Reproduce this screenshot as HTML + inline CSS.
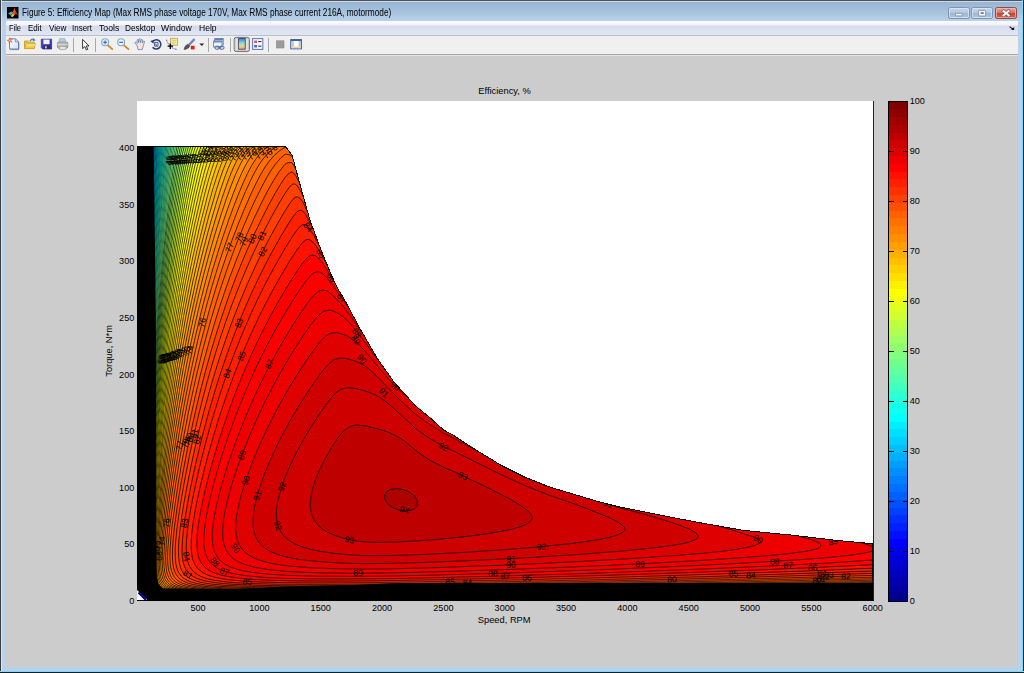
<!DOCTYPE html>
<html><head><meta charset="utf-8"><title>Figure 5</title>
<style>
html,body{margin:0;padding:0;}
body{width:1024px;height:673px;overflow:hidden;position:relative;background:#b9d1ea;font-family:"Liberation Sans",sans-serif;}
#frame{position:absolute;left:0;top:0;width:1024px;height:673px;box-sizing:border-box;background:#b9d1ea;}
#edgeT{position:absolute;left:0;top:0;width:1024px;height:1px;background:#4e5256;}
#edgeL{position:absolute;left:0;top:0;width:2px;height:673px;background:linear-gradient(90deg,#3a3b3d 0,#3a3b3d 1px,#d9e8f8 1px);}
#edgeR{position:absolute;left:1022px;top:0;width:2px;height:673px;background:linear-gradient(90deg,#7fd8f6 0,#7fd8f6 1px,#0b252c 1px);}
#edgeB{position:absolute;left:0;top:671px;width:1024px;height:2px;background:linear-gradient(180deg,#7fd8f6 0,#7fd8f6 1px,#0b252c 1px);}
#title{position:absolute;left:1px;top:1px;width:1021px;height:20px;background:linear-gradient(180deg,#c9dcef 0,#c9dcef 1px,#98b4d2 1px,#a4bfdc 9px,#b7d0e9 19px,#b9d1ea 20px);}
#title .txt{position:absolute;left:21px;top:5.8px;font-size:10px;line-height:11.4px;color:#000;white-space:nowrap;transform:scaleX(0.8275);transform-origin:0 0}
#menu{position:absolute;left:6px;top:21px;width:1012px;height:14px;background:linear-gradient(180deg,#fcfcfe 0,#f1f3f9 4px,#d5daec 5px,#dde2f3 10px,#e1e6f6 14px);}
#menu span{position:absolute;top:2px;font-size:9.5px;line-height:10.9px;color:#000;transform-origin:0 0;white-space:nowrap}
#menuline{position:absolute;left:6px;top:35px;width:1012px;height:1px;background:#bdbfc6;}
#tool{position:absolute;left:6px;top:36px;width:1012px;height:18px;background:#f0f0f0;}
#toolline{position:absolute;left:6px;top:54px;width:1012px;height:1px;background:#a5a5a5;}
#toolline2{position:absolute;left:6px;top:55px;width:1012px;height:1px;background:#e4e4e4;}
#fig{position:absolute;left:6px;top:56px;width:1012px;height:611px;background:#cccccc;}
svg{position:absolute;left:0;top:0;}
</style></head><body>
<div id="frame"></div>
<div id="title"><div class="txt">Figure 5: Efficiency Map (Max RMS phase voltage 170V, Max RMS phase current 216A, motormode)</div></div>
<div id="menu"><span style="left:3.0px;transform:scaleX(0.784)">File</span><span style="left:22.0px;transform:scaleX(0.840)">Edit</span><span style="left:42.5px;transform:scaleX(0.857)">View</span><span style="left:66.0px;transform:scaleX(0.842)">Insert</span><span style="left:92.8px;transform:scaleX(0.913)">Tools</span><span style="left:118.8px;transform:scaleX(0.869)">Desktop</span><span style="left:155.2px;transform:scaleX(0.910)">Window</span><span style="left:192.8px;transform:scaleX(0.896)">Help</span></div>
<div id="menuline"></div>
<div id="tool"></div>
<div id="toolline"></div><div id="toolline2"></div>
<div id="fig"></div>
<svg width="1024" height="673" viewBox="0 0 1024 673" style="z-index:2">
<defs>
<linearGradient id="gbtn" x1="0" y1="0" x2="0" y2="1"><stop offset="0" stop-color="#c7d8eb"/><stop offset="0.45" stop-color="#b3c9e2"/><stop offset="0.5" stop-color="#9db8d8"/><stop offset="1" stop-color="#aac4e0"/></linearGradient>
<linearGradient id="gcls" x1="0" y1="0" x2="0" y2="1"><stop offset="0" stop-color="#e9a99c"/><stop offset="0.45" stop-color="#d9776a"/><stop offset="0.5" stop-color="#c4452f"/><stop offset="1" stop-color="#d2694f"/></linearGradient>
<linearGradient id="gcb" x1="0" y1="0" x2="0" y2="1"><stop offset="0" stop-color="#4f6fe0"/><stop offset="0.35" stop-color="#6fd0ee"/><stop offset="0.6" stop-color="#b9e8a0"/><stop offset="0.8" stop-color="#f3c77a"/><stop offset="1" stop-color="#ee8fa0"/></linearGradient>
<linearGradient id="gpage" x1="0" y1="0" x2="1" y2="1"><stop offset="0" stop-color="#ffffff"/><stop offset="1" stop-color="#d3e3f7"/></linearGradient>
<linearGradient id="gfold" x1="0" y1="0" x2="0" y2="1"><stop offset="0" stop-color="#fdf0a0"/><stop offset="1" stop-color="#e8b830"/></linearGradient>
<linearGradient id="gflop" x1="0" y1="0" x2="1" y2="1"><stop offset="0" stop-color="#4a45d8"/><stop offset="1" stop-color="#2a2a9a"/></linearGradient>
</defs>
<!-- matlab icon -->
<rect x="7" y="7" width="11.5" height="11.5" fill="#000"/>
<path d="M8 13.5L11.5 11.2L13 12.8L10.6 15.2Z" fill="#3fa9c9"/>
<path d="M10.6 15.4L13 11.5L14.4 8L15.8 11.5L17.8 15.2L15.6 13.6L13.8 15.8L12.2 17.2Z" fill="#e2571c"/>
<path d="M11 16L13 13.5L14 15.3L12.2 17.3Z" fill="#f6c12d"/>
<path d="M14.4 8L15.8 11.5L17.8 15.2L15.6 13.6Z" fill="#b8321a"/>
<!-- window buttons -->
<g>
<rect x="948.5" y="7.5" width="21" height="11" rx="1.8" fill="url(#gbtn)" stroke="#8093ad"/>
<rect x="971.5" y="7.5" width="21" height="11" rx="1.8" fill="url(#gbtn)" stroke="#8093ad"/>
<rect x="995.5" y="7.5" width="21" height="11" rx="1.8" fill="url(#gcls)" stroke="#8c4a4e"/>
<rect x="949.5" y="8.5" width="19" height="9" rx="1" fill="none" stroke="#dbe7f4" stroke-opacity="0.75"/>
<rect x="972.5" y="8.5" width="19" height="9" rx="1" fill="none" stroke="#dbe7f4" stroke-opacity="0.75"/>
<rect x="996.5" y="8.5" width="19" height="9" rx="1" fill="none" stroke="#f3c2b8" stroke-opacity="0.7"/>
<rect x="955.6" y="13.3" width="6.6" height="2.6" rx="0.8" fill="#f4f6fa" stroke="#7a8699" stroke-width="0.8"/>
<rect x="978.6" y="10.4" width="7" height="5.6" rx="0.8" fill="#f4f6fa" stroke="#7a8699" stroke-width="0.8"/><rect x="980.7" y="12.3" width="3" height="1.5" fill="#55647c"/>
<path d="M1003.5 11.1L1008.6 15.3M1008.6 11.1L1003.5 15.3" stroke="#8a5a58" stroke-width="3.3" stroke-linecap="square"/>
<path d="M1003.5 11.1L1008.6 15.3M1008.6 11.1L1003.5 15.3" stroke="#f8f8f8" stroke-width="2" stroke-linecap="square"/>
</g>
<!-- dock arrow -->
<path d="M1009.6 26.6L1013 29.2" stroke="#111" stroke-width="1.1" fill="none"/><path d="M1011 29.9L1014.2 29.9L1014.2 27Z" fill="#111"/>
<!-- toolbar separators -->
<g fill="#a8a8a8"><rect x="73" y="38" width="1" height="14"/><rect x="95" y="38" width="1" height="14"/><rect x="208" y="38" width="1" height="14"/><rect x="230" y="38" width="1" height="14"/><rect x="268" y="38" width="1" height="14"/></g>
<!-- new -->
<path d="M9.5 38.8L15.5 38.8L18.5 41.8L18.5 49L9.5 49Z" fill="url(#gpage)" stroke="#6e86b8" stroke-width="1"/>
<path d="M15.3 38.8L15.3 42L18.5 42" fill="none" stroke="#6e86b8" stroke-width="0.8"/>
<path d="M10 49.6L18.9 49.6L18.9 42.5" fill="none" stroke="#5a6ea0" stroke-width="1" opacity="0.7"/>
<path d="M9.6 37.6L10.4 39.5L12.4 39.2L11 40.6L12.2 42.4L10.2 41.6L9 43.2L8.9 41.1L7 40.4L8.9 39.7Z" fill="#f0703a" stroke="#e04a20" stroke-width="0.4"/><circle cx="9.7" cy="40.4" r="0.9" fill="#ffd36a"/>
<!-- open -->
<path d="M24.5 41L28.3 41L29.5 42.2L34.5 42.2L34.5 48.5L24.5 48.5Z" fill="#e9bd3a" stroke="#c79a22" stroke-width="0.8"/>
<path d="M26.5 43.8L35.6 43.8L33.8 48.6L24.6 48.6Z" fill="url(#gfold)" stroke="#d2a52a" stroke-width="0.7"/>
<path d="M30 41.2C31 39.4 32.8 38.8 34.4 39.6" fill="none" stroke="#4f78c2" stroke-width="1.2"/><path d="M33.2 38.3L35.6 40.3L32.6 41.2Z" fill="#4f78c2"/>
<!-- save -->
<path d="M41.3 39.2L51.6 39.2L51.6 49L42.6 49L41.3 47.7Z" fill="url(#gflop)" stroke="#2a2a8a" stroke-width="0.7"/>
<rect x="43.4" y="39.6" width="6.2" height="4.6" fill="#f0f3fb"/>
<rect x="44" y="45.6" width="5.4" height="3.2" fill="#2c2c55"/><rect x="45.1" y="46.2" width="1.6" height="2.2" fill="#d9dcf0"/>
<!-- print -->
<path d="M59.6 38.6L65 38.6L66 43L58.8 43Z" fill="#a9cff2" stroke="#86a8d0" stroke-width="0.6"/>
<path d="M57.4 43.2C57.4 42.4 58 42 58.8 42L66.4 42C67.3 42 67.9 42.5 67.9 43.4L67.9 47C67.9 47.8 67.3 48.2 66.6 48.2L58.6 48.2C57.9 48.2 57.4 47.8 57.4 47Z" fill="#b9b9b9" stroke="#8a8a8a" stroke-width="0.7"/>
<path d="M59 46.4L66.4 46.4L65.6 49.6L59.8 49.6Z" fill="#e4e4e4" stroke="#8a8a8a" stroke-width="0.6"/>
<rect x="57.6" y="44.2" width="10.2" height="1" fill="#dcdcdc"/><circle cx="66.3" cy="45.6" r="0.6" fill="#4ec24e"/>
<!-- arrow cursor -->
<path d="M82.6 39.4L82.6 48.6L84.8 46.6L86.4 50L87.8 49.3L86.2 46L89 46Z" fill="#fff" stroke="#222" stroke-width="0.9" stroke-linejoin="round"/>
<!-- zoom in -->
<path d="M107.3 44.8L112.2 49" stroke="#e0973a" stroke-width="2" stroke-linecap="round"/><path d="M107.3 44.8L112.2 49" stroke="#b86f20" stroke-width="0.5" transform="translate(0.5,0.7)"/>
<circle cx="105.1" cy="42.3" r="3.5" fill="#e8f3fc" stroke="#7fa6d6" stroke-width="1.1"/><path d="M103.2 42.3L107 42.3M105.1 40.4L105.1 44.2" stroke="#2f5fa8" stroke-width="1.1"/>
<!-- zoom out -->
<path d="M123.3 44.8L128.4 49" stroke="#e0973a" stroke-width="2" stroke-linecap="round"/><path d="M123.3 44.8L128.4 49" stroke="#b86f20" stroke-width="0.5" transform="translate(0.5,0.7)"/>
<circle cx="121.1" cy="42.3" r="3.5" fill="#e8f3fc" stroke="#7fa6d6" stroke-width="1.1"/><path d="M119.2 42.3L123 42.3" stroke="#2f5fa8" stroke-width="1.1"/>
<!-- hand -->
<path d="M136.8 45.2L135 43.2C134.5 42.5 135.4 41.8 136 42.4L137.2 43.6L137 40.2C137 39.4 138.2 39.4 138.3 40.2L138.7 42.6L138.9 39.2C139 38.4 140.2 38.4 140.2 39.2L140.4 42.6L141.2 39.8C141.4 39 142.5 39.3 142.4 40.1L142.1 43L143.4 41.2C143.9 40.6 144.8 41.1 144.5 41.8L143.4 45.2C143 47 142.6 48 142.2 49.6L138 49.6C137.8 48 137.5 46.4 136.8 45.2Z" fill="#fbe3cf" stroke="#5b7fc0" stroke-width="0.8" stroke-linejoin="round"/>
<!-- rotate -->
<path d="M152.2 42.2A4.6 4.6 0 1 1 152.6 47.2" fill="none" stroke="#2a3f78" stroke-width="1.5"/><path d="M150.2 41L153.6 40L153.6 43.8Z" fill="#2a3f78"/>
<path d="M154.6 42.4L158 42.4L158 46.2L154.6 46.2ZM155.8 43.6L155.8 45.2L157 45.2" fill="none" stroke="#2a3f78" stroke-width="0.8"/>
<!-- data cursor -->
<rect x="170.4" y="38.3" width="7.2" height="7" fill="#f2eaa0" stroke="#b5a94a" stroke-width="0.8"/><path d="M171.8 40.4L176.2 40.4M171.8 42L176.2 42M171.8 43.6L175 43.6" stroke="#c9bf6a" stroke-width="0.6"/>
<path d="M166.4 39.6C167.6 43.6 170.6 48.6 177 49.4" fill="none" stroke="#3a3aff" stroke-width="0.8" stroke-dasharray="2.2 1"/>
<path d="M167.6 46.2L173 46.2M170.3 43.5L170.3 48.9" stroke="#000" stroke-width="1.3"/>
<!-- brush -->
<path d="M188.2 44.6L193.8 38.6L195 39.8L189.4 45.8Z" fill="#6c8ed8" stroke="#3b5aa8" stroke-width="0.5"/>
<path d="M184 49.4C184.4 47 186 44.8 187.8 44.2L189.8 46.2C189 48 186.6 49.4 184 49.4Z" fill="#555" stroke="#333" stroke-width="0.5"/>
<rect x="190.8" y="45.8" width="3.8" height="3.6" fill="#f01818"/>
<path d="M199.4 43.4L204.2 43.4L201.8 46Z" fill="#222"/>
<!-- link -->
<rect x="214.8" y="38.6" width="8.4" height="6.4" fill="#dfe9f6" stroke="#5e7fb5" stroke-width="0.9"/><rect x="214.8" y="38.6" width="8.4" height="1.6" fill="#5e7fb5"/>
<rect x="213.6" y="41" width="8.4" height="6" fill="#eef3fa" stroke="#5e7fb5" stroke-width="0.9"/><rect x="213.6" y="41" width="8.4" height="1.5" fill="#6d8cc0"/>
<rect x="215" y="46.2" width="4.4" height="3" rx="1.4" fill="none" stroke="#44619a" stroke-width="1"/><rect x="219.6" y="46.2" width="4.4" height="3" rx="1.4" fill="none" stroke="#44619a" stroke-width="1"/><path d="M218.4 47.7L220.8 47.7" stroke="#44619a" stroke-width="1"/>
<!-- colorbar button pressed -->
<rect x="234.2" y="37.4" width="15.2" height="14.2" rx="2" fill="#e2e2e2" stroke="#6c6c6c" stroke-width="1"/><rect x="235.2" y="38.4" width="13.2" height="12.2" rx="1.4" fill="none" stroke="#c2c2c2" stroke-width="0.8"/>
<rect x="238.6" y="38.6" width="6.6" height="10.6" fill="url(#gcb)" stroke="#3a3a4a" stroke-width="0.8"/>
<!-- legend -->
<rect x="252.6" y="38.6" width="10.2" height="10.8" fill="#f4f6fb" stroke="#5d78b8" stroke-width="1"/>
<rect x="254.2" y="40.6" width="2.8" height="2.4" fill="#f04a4a"/><rect x="254.2" y="45" width="2.8" height="2.4" fill="#4a5af0"/><path d="M258.2 41.6L261.4 41.6M258.2 46.2L261.4 46.2" stroke="#222" stroke-width="1"/>
<!-- hide tools -->
<rect x="276.4" y="40.8" width="7.6" height="7.2" fill="#9c9c9c" stroke="#8a8a8a" stroke-width="0.6"/>
<!-- show tools -->
<rect x="290.8" y="39.6" width="10.6" height="9.2" fill="#fdfdfd" stroke="#3f5fa8" stroke-width="1.1"/><rect x="290.8" y="39.4" width="10.6" height="1.6" fill="#3f5fa8"/>
<rect x="291.4" y="41" width="2.4" height="7.2" fill="#bcc5d6"/><rect x="298.6" y="41" width="2.3" height="7.2" fill="#bcc5d6"/><rect x="291.4" y="46.6" width="9.5" height="1.6" fill="#e6d9a0"/>
</svg>

<svg width="1024" height="673" viewBox="0 0 1024 673" font-family="Liberation Sans, sans-serif">
<rect x="137" y="101" width="736" height="500" fill="#fff"/>
<defs><clipPath id="env"><path d="M137 601L137 146L285 146L292 155L300.4 185.9L310 220.3L320.6 248.9L331.3 275L338.5 290L343.8 298.5L360.4 329.4L377 358L393.7 381.7L415 405.5L430 417.8L443.6 430L453.8 435.6L477.5 451L501.3 465.4L525 477.2L548.8 486.7L572.6 493.9L596.3 501L620 507L643.9 511.7L670 517L696.9 522.2L743.7 530.4L790.6 535L837.5 540.5L873 543.7L873 601Z"/></clipPath></defs>
<g clip-path="url(#env)" stroke="#000" stroke-width="0.75" stroke-linejoin="round">
<rect x="137" y="146" width="737" height="455" fill="#000" stroke="none"/>
<defs><path id="c0" d="M137.4 146L873 146L873 600.4L156 600.5L140 600.4L138.2 600.3L137.5 600.1L137.2 599.7L137.1 598.2L137.1 585L137.4 146Z"/><path id="c1" d="M137.8 146L873 146L873 600.4L160.8 600.4L141.2 600.4L138.8 600.3L137.8 600L137.4 599.2L137.2 597.5L137.1 581.2L137.8 146Z"/><path id="c2" d="M138.2 146L873 146L873 600.3L163 600.4L141.8 600.3L139.2 600.2L138 599.9L137.5 599L137.3 596.8L137.2 576.2L137.6 336.5L138.2 146Z"/><path id="c3" d="M138.6 146L873 146L873 600.3L165.8 600.4L142.5 600.3L139.5 600.1L138.2 599.8L137.6 598.8L137.4 596.2L137.3 574L137.8 336.5L138.6 146Z"/><path id="c4" d="M139 146L873 146L873 600.2L168.5 600.4L143.2 600.3L140 600.1L138.5 599.7L138 599.2L137.8 598.6L137.5 596L137.4 571.5L138 336.5L139 146Z"/><path id="c5" d="M139.5 146L873 146L873 600.2L167.5 600.3L143.5 600.2L140.1 600L138.5 599.5L138.1 599L137.8 598L137.5 594L137.5 556L138.3 329.5L139.5 146Z"/><path id="c6" d="M139.9 146L873 146L873 600.1L170.8 600.3L144.5 600.2L140.8 600L138.8 599.5L138.3 599L138 598.2L137.6 594.5L137.5 561.5L138.5 326L139.9 146Z"/><path id="c7" d="M140.4 146L873 146L873 600L171.8 600.3L144.8 600.1L140.8 599.9L139 599.4L138.4 598.8L138 597.8L137.7 593.8L137.7 553L138.8 323.4L139.5 228.7L140.4 146Z"/><path id="c8" d="M140.8 146L873 146L873 600L174.5 600.2L145 600.1L140.8 599.8L139.1 599.2L138.4 598.5L138.1 597.2L137.8 592.2L137.8 538.5L139 322.2L139.8 230L140.8 146Z"/><path id="c9" d="M141.3 146L873 146L873 599.9L177 600.2L145.8 600L141.2 599.8L139.4 599.2L138.6 598.5L138.2 597.5L137.8 592.2L137.9 539L139.2 321.8L140.2 227L141.3 146Z"/><path id="c10" d="M141.8 146L873 146L873 599.9L177.5 600.2L145.9 600L141.8 599.7L139.5 599.1L138.8 598.4L138.3 597L137.9 591.5L138 530L138.8 412.7L139.5 317.5L140.6 228L141.8 146Z"/><path id="c11" d="M142.3 146L873 146L873 599.8L177.5 600.1L146.5 600L141.8 599.7L139.6 599L138.9 598.2L138.4 596.8L138 590L138.2 512.8L139 404L139.9 308L141 223.3L142.3 146Z"/><path id="c12" d="M142.8 146L873 146L873 599.7L180 600.1L147.5 599.9L142.2 599.6L139.9 599L139 598.1L138.5 596.6L138.1 589.8L138.4 510.5L139.2 397.5L140.2 306L141.4 219.5L142.8 146Z"/><path id="c13" d="M143.3 146L873 146L873 599.6L180 600.1L147.2 599.9L142.2 599.5L140 598.9L139.1 598L138.6 596.2L138.3 593.2L138.2 588.5L138.6 494L139.5 392.6L140.5 304L141.8 220.5L143.3 146Z"/><path id="c14" d="M143.9 146L873 146L873 599.6L180 600L147.2 599.8L142.5 599.5L141.2 599.2L140.1 598.8L139.2 597.8L138.7 596L138.4 592.8L138.3 587L138.9 480L139.8 382.5L141 293.5L142.3 215.5L143.9 146Z"/><path id="c15" d="M144.4 146L873 146L873 599.5L182.5 600L148 599.8L143 599.5L141.5 599.2L140.4 598.8L139.4 597.8L138.8 596L138.5 592.8L138.4 587.2L138.4 558L139 483.2L140 386.3L141.2 296.5L142.8 215.6L144.4 146Z"/><path id="c16" d="M145 146L873 146L873 599.4L185 600L148.8 599.8L143.2 599.4L141.5 599L140.5 598.6L139.5 597.5L138.9 595.5L138.6 592L138.5 586.2L138.5 555.5L139.2 473L140.3 378.5L141.6 292.5L143.2 212.6L145 146Z"/><path id="c17" d="M145.6 146L873 146L873 599.3L185.5 599.9L149.2 599.7L143.2 599.3L141.8 599L140.7 598.5L140.1 598L139.6 597.2L139 595.2L138.7 591.8L138.5 585.2L138.7 547L139.5 464.8L140.7 371.5L142 291.1L143.8 210.6L145.6 146Z"/><path id="c18" d="M146.2 146L873 146L873 599.3L187.5 599.9L150 599.7L143.8 599.3L142.2 599L141 598.5L140.3 598L139.8 597.2L139.2 595.2L138.8 591.8L138.7 585.5L138.8 552L139.7 466L140.9 371.5L142.4 290L144.2 210.5L146.2 146Z"/><path id="c19" d="M146.7 146.5L146.8 146L873 146L873 599.2L186.5 599.9L149.5 599.6L144 599.2L142.2 598.8L141 598.3L140.3 597.8L139.8 597L139.2 594.8L138.9 590.8L138.8 583.8L139 541.9L140 452.7L141.2 367L142.8 286L144.8 208.4L146.7 146.5Z"/><path id="c20" d="M147.4 146L873 146L873 599.1L187.5 599.8L149.8 599.5L144 599.1L142.4 598.8L141.2 598.2L140.1 597L139.4 594.8L139 590.5L138.9 583.5L139.2 538L140.2 448.3L141.6 360.5L143.2 282.7L145.2 208.1L147.4 146Z"/><path id="c21" d="M148 146L873 146L873 599L189 599.8L150.6 599.5L144.5 599.1L142.9 598.8L141.5 598.2L140.8 597.6L140.2 597L139.5 594.5L139.1 590.5L139 583.5L139.2 542.7L140.5 447.5L142 356.4L143.7 281L145.8 208.3L148 146Z"/><path id="c22" d="M148.7 146L873 146L873 598.9L503.4 599.5L189.8 599.8L151 599.4L144.7 599L142.8 598.6L141.5 598L140.8 597.3L140.2 596.5L139.6 594L139.2 589.8L139.1 582L139.5 532.6L140.8 442L142.2 358.6L144.1 280L146.3 207L148.7 146Z"/><path id="c23" d="M149.4 146L873 146L873 598.8L459.1 599.5L192.5 599.7L151.8 599.4L145.2 599L143.2 598.6L141.8 598L141 597.3L140.5 596.6L139.8 594.1L139.4 589.8L139.2 582L139.7 531L141 439.9L142.6 356.5L144.5 280.1L146.9 205.5L149.4 146Z"/><path id="c24" d="M150.1 146L873 146L873 598.8L425.5 599.5L192.5 599.7L164.8 599.6L151.8 599.3L145.2 598.9L143.5 598.5L142 597.9L141.2 597.2L140.7 596.5L140.2 595.5L139.9 593.8L139.5 589.5L139.3 581.5L139.8 535.9L141.2 438.4L143 352.5L145 277.4L147.5 204.2L150.1 146Z"/><path id="c25" d="M150.7 146.5L150.8 146L873 146L873 598.7L464 599.4L193 599.6L164.5 599.5L151.8 599.3L145.3 598.8L143.5 598.3L142.1 597.8L141.3 597L140.8 596.2L140 593.5L139.6 588.8L139.5 580.8L140 528.7L141.5 435L143.3 352L145.5 275.3L148.1 204L150.7 146.5Z"/><path id="c26" d="M151.5 146.5L151.5 146L873 146L873 598.6L510 599.3L195 599.6L168.2 599.5L153.3 599.2L146.1 598.8L144 598.3L142.5 597.7L141.6 597L141 596.2L140.2 593.8L139.8 589L139.6 581L140.2 527.5L141.8 436.7L143.7 349.5L145.9 276L148.8 202L151.5 146.5Z"/><path id="c27" d="M152.2 146.5L152.3 146L873 146L873 598.5L470.4 599.2L193.5 599.5L166.5 599.4L152.8 599.2L146 598.6L144 598.2L142.5 597.5L141.6 596.8L141 595.8L140.2 592.8L139.9 587.8L139.7 579L140.5 517.6L142.2 424.7L144.2 343.5L146.5 272.7L149.4 201.5L152.2 146.5Z"/><path id="c28" d="M153 146L873 146L873 598.4L437.5 599.2L198 599.5L168.2 599.4L153.8 599.1L146.5 598.6L144.5 598.2L142.9 597.5L141.9 596.8L141.3 595.8L140.5 593L140 588L139.9 579.2L140.7 518.5L142.5 425.3L144.5 347.5L147 272.2L150 201.5L151.7 167.5L153 146Z"/><path id="c29" d="M153.8 146L873 146L873 598.3L473.5 599.1L197.5 599.4L167.5 599.3L153.5 599L146.8 598.5L144.5 598L143 597.3L142 596.5L141.4 595.5L140.6 592.5L140.2 587.2L140 578.2L141 512.5L142.9 421.5L145 343.2L147.5 271L150.8 199.4L152.5 166.9L153.8 146Z"/><path id="c30" d="M154.7 146L873 146L873 598.1L500.3 599L198.5 599.4L169 599.3L154.9 599L147.2 598.4L145 598L143.2 597.2L142.3 596.5L141.6 595.5L141.2 594.2L140.8 592.4L140.3 587L140.2 577.8L141.2 509L143.2 417.4L145.5 339.8L148.2 266.2L151.5 197.8L153.2 166.9L154.7 146Z"/><path id="c31" d="M155.5 146.5L155.5 146L873 146L873 598L463.2 599L199 599.3L170.5 599.2L155 598.9L147.2 598.3L145 597.8L143.5 597.1L142.5 596.3L141.8 595.2L140.9 592.2L140.5 587L140.3 577.5L141.2 517.2L143.5 419.2L146 337L148.8 267L152.2 196.8L154 167.3L155.5 146.5Z"/><path id="c32" d="M156.4 146L873 146L873 597.9L451.5 599L199.5 599.3L170 599.1L155 598.8L147.7 598.2L145.4 597.8L143.7 597L142.8 596.2L142 595.1L141.5 593.8L141.1 592L140.6 586.5L140.5 576.5L140.8 551.5L141.8 502.9L144 412.2L146.5 334.8L149.5 263L153 196L154.9 165.5L156.4 146Z"/><path id="c33" d="M157.3 146L873 146L873 597.8L513.8 598.8L202.5 599.2L171 599.1L155.5 598.8L148 598.2L145.8 597.7L144 596.9L143 596.1L142.2 595L141.6 593.5L141.3 591.8L140.8 586L140.7 576.5L141 552.5L141.8 512.8L144.2 414.7L147 334L150 264.2L153.8 196L155.8 165.5L157.3 146Z"/><path id="c34" d="M158.2 146L873 146L873 597.7L478.2 598.8L202.5 599.1L171.5 599L156.5 598.7L151.8 598.4L148 598L145.8 597.5L144.1 596.8L143.2 596L142.4 594.8L141.8 593.2L141.4 591.5L141 585.8L140.9 575.2L141.2 546.6L142.2 500.7L144.8 409.1L147.5 332.1L150.8 261.1L154.8 192.3L156.7 164L158.2 146Z"/><path id="c35" d="M159.2 146L873 146L873 597.6L443 598.7L204 599.1L173.8 599L157 598.6L148.8 598L146.4 597.5L144.5 596.7L143.5 595.9L142.7 594.8L142.1 593.2L141.7 591.5L141.2 585.8L141 575.5L141.3 552.5L142.2 510.3L145 412.1L147.9 334L151.2 263.3L153.2 228.1L155.5 193L157.5 165L159.2 146Z"/><path id="c36" d="M160.2 146L873 146L873 597.4L510.5 598.5L203.5 599L172.2 598.9L156.5 598.5L152.1 598.2L148.5 597.8L146.3 597.3L144.7 596.5L143.5 595.5L142.8 594.3L142.2 592.8L141.8 590.8L141.3 584.5L141.2 574.2L141.6 547L142.8 499.9L145.5 407.8L148.5 331L152 261.1L154 227.6L156.4 192.5L158.5 164.3L160.2 146Z"/><path id="c37" d="M161.2 146L873 146L873 597.3L481 598.5L207 598.9L174.8 598.8L158.3 598.5L153.2 598.2L149.2 597.8L146.9 597.2L145 596.4L143.9 595.5L143 594.2L142.5 592.8L142 590.8L141.5 584.5L141.4 573.8L141.8 547.5L143 500L146 404.3L149 330.5L152.8 259.6L155 223.8L157.2 191.8L159.5 163.6L161.2 146Z"/><path id="c38" d="M162.2 146.5L162.3 146L873 146L873 597.1L448 598.5L207 598.9L175.4 598.8L158.2 598.4L149.8 597.7L147 597.1L145.2 596.2L144 595.2L143.2 594.1L142.7 592.5L142.2 590.5L141.7 584L141.6 572.8L142.1 547L143.2 500.4L144.8 451L146.5 401.4L149.8 326.3L153.5 258.5L155.8 224.2L158.2 190.3L160.5 163.4L162.2 146.5Z"/><path id="c39" d="M163.4 146L873 146L873 597L507.7 598.2L207.5 598.8L175.5 598.7L158.2 598.3L153.6 598L149.8 597.5L147.5 597L145.5 596.1L144.4 595.2L143.6 594L142.9 592.5L142.4 590.2L141.9 583.8L141.8 572.2L142.4 542.5L143.8 492.6L147 399L150.2 327.3L154.2 257.8L156.8 221.5L159.2 189.2L161.6 163L163.4 146Z"/><path id="c40" d="M164.5 146.5L164.6 146L873 146L873 596.9L474.1 598.2L210.5 598.7L177 598.6L159.9 598.2L154.8 598L150.6 597.5L147.8 596.8L145.8 596L144.6 595L143.8 593.8L143.1 592L142.7 590L142.1 583.5L142 572.2L142.6 543.5L144 493.9L147.2 403.3L150.8 328.4L152.8 292.9L155 257.6L157.5 222.7L160.2 188.7L162.6 163L164.5 146.5Z"/><path id="c41" d="M165.7 146.5L165.8 146L873 146L873 596.7L481 598.1L210 598.7L176 598.5L159.5 598.1L154 597.8L150.5 597.3L148 596.7L146 595.8L144.8 594.8L144 593.5L143.3 591.8L142.8 589.2L142.3 582.2L142.3 570.5L143 537L144.5 487.7L146.2 438.6L148 396L151.8 320.9L153.8 287.6L156 254.2L158.5 221L161.2 188.5L163.8 162.5L165.7 146.5Z"/><path id="c42" d="M167 146L873 146L873 596.5L492.4 598L212 598.6L178.5 598.4L160.2 598L155.2 597.7L151.3 597.2L148.5 596.6L146.5 595.7L145.3 594.8L144.4 593.5L143.7 591.8L143.1 589.5L142.6 582.5L142.5 570.8L143.2 538L144.8 489.6L146.5 442.1L148.5 395.1L152.2 322.9L154.5 286.9L156.8 254.8L159.5 219.9L162.5 186.5L165 161.5L167 146Z"/><path id="c43" d="M168.2 146.5L168.3 146L873 146L873 596.4L459.3 598L213.5 598.5L179 598.3L161.2 598L155.8 597.6L151.8 597.1L148.9 596.5L146.7 595.5L145.5 594.5L144.5 593L143.8 591.2L143.4 589L142.8 582L142.8 570L143.5 537.7L145 491.7L147 439.6L149 394.7L151 355.6L153 321.1L155.2 286.6L157.5 255.8L160.2 222.1L163.4 187.5L166 163L168.2 146.5Z"/><path id="c44" d="M169.6 146L873 146L873 596.2L503.4 597.8L214 598.4L179.2 598.2L161.2 597.8L156.2 597.5L152.1 597L149 596.3L147 595.3L145.8 594.2L144.8 592.8L144 590.8L143.6 588.5L143 581L143 568.5L143.8 538.5L145.5 487.2L147.5 437.6L149.8 389.7L151.8 352.6L154 315.9L156.2 283.3L158.8 250.9L161.8 216.2L164.8 185.3L167.4 161.5L169.6 146Z"/><path id="c45" d="M171 146L873 146L873 596L470.5 597.8L216 598.3L181.5 598.2L162.5 597.8L157 597.4L152.8 596.9L149.8 596.2L147.5 595.2L146.2 594.2L145.2 592.8L144.5 591L143.9 588.5L143.3 581.2L143.3 569L144 539.6L145.8 489.9L147.8 441.7L150 395L152.2 354.5L154.5 318.9L157 283.9L159.5 252.6L162.8 216.5L166 184.4L168.8 160.9L171 146Z"/><path id="c46" d="M172.4 146L873 146L873 595.8L508.2 597.5L331.5 598.1L217 598.2L181 598.1L162.8 597.6L157.1 597.2L153 596.8L149.9 596L147.7 595L146.5 594L145.5 592.5L144.7 590.5L144.2 588L143.6 580.5L143.6 567.5L144.5 533.4L146.2 486.5L148.5 435.2L150.8 391L153 352.5L155.2 318.5L157.8 284.8L160.5 251.8L163.8 217.1L167.2 184L170.1 161L172.4 146Z"/><path id="c47" d="M173.9 146L873 146L873 595.7L475.4 597.5L217 598.1L182.5 598L163.2 597.5L157.2 597.1L153 596.5L150.1 595.8L148 594.8L146.6 593.5L145.6 592L144.9 590L144.4 587.5L143.9 579.5L143.9 566L144.8 535.2L146.8 483.7L149 434.7L151.5 387.8L153.8 351.1L156.2 315.1L159 280L161.8 248.8L165.2 213.3L168.7 182L171.5 160.5L173.9 146Z"/><path id="c48" d="M175.5 146L873 146L873 595.5L507.6 597.2L327 597.9L218.5 598L183 597.9L164 597.4L158.2 597L154 596.5L151 595.8L148.5 594.6L147 593.3L146 591.8L145.2 589.8L144.7 587.2L144.2 579.2L144.2 565.5L145.2 530.3L147.2 481.5L149.8 429.7L152.2 385.2L154.8 346.5L157.2 312.3L160 278.9L163 246.4L166.5 212.5L170.1 181.5L173 160.1L175.5 146Z"/><path id="c49" d="M177.1 146L873 146L873 595.3L474.9 597.2L221.5 597.9L184.2 597.8L164.8 597.3L158.5 596.8L154.2 596.3L151.2 595.5L149 594.5L147.5 593.3L146.5 591.8L145.7 589.8L145.1 587L144.7 583.5L144.5 579L144.5 565.5L145.5 532.8L147.8 479.8L150.2 430.2L152.8 387.2L155.2 349.7L158 313.3L161 278.3L164 247.1L167.8 212.2L171.5 181.3L174.5 160L177.1 146Z"/><path id="c50" d="M178.8 146L873 146L873 595L502.3 597L325.5 597.7L222 597.8L185.5 597.6L165.8 597.2L159.6 596.8L155 596.2L151.8 595.4L149.3 594.2L147.9 593L146.8 591.4L145.9 589.2L145.4 586.5L145 583L144.8 578.2L144.8 564.5L146 529.2L148.2 478.7L150.8 430.9L153.5 385.7L156.2 346.3L159 311.7L162 278.1L165.2 245.7L169 212.4L173 180.8L176.1 160L177.5 152.1L178.8 146Z"/><path id="c51" d="M180.5 146.5L180.6 146L873 146L873 594.8L469.3 597L322.5 597.5L223.5 597.7L185.5 597.5L166 597L159.8 596.6L155.6 596L152.2 595.2L149.7 594L148.2 592.8L147.1 591L146.2 588.8L145.7 586L145.3 582.2L145.1 577.5L145.2 563L146.5 526.2L149 473.1L151.8 423.6L154.5 381L157.2 343.7L160 310.6L163 278.4L166.5 245L170.5 211L174.5 180.7L177.7 160L180.5 146.5Z"/><path id="c52" d="M182.5 146L873 146L873 594.6L492.6 596.8L322.5 597.4L224 597.6L186.5 597.4L166.5 596.8L160.2 596.4L155.7 595.8L152.5 594.9L150.1 593.8L148.7 592.5L147.5 590.8L146.6 588.5L146 585.5L145.7 581.8L145.5 576.8L145.6 562L147 523.9L149.5 473L152.2 425.4L155.2 380.5L158.2 341.6L161.2 307.3L164.5 274.3L168 242.5L172.2 208.2L176.5 177.8L179.6 159L181 152L182.5 146Z"/><path id="c53" d="M184.4 146L873 146L873 594.3L512 596.5L334.9 597.2L225.5 597.5L187.5 597.3L167.7 596.7L161.2 596.2L156.5 595.6L153.1 594.8L150.5 593.5L149 592.1L147.8 590.2L147 588L146.4 585L146 581L145.8 575.8L146 560.5L147.5 522.2L150.2 468.9L153.2 419.7L156.2 377.3L159.2 340.2L162.2 307.3L165.8 273.3L169.5 240.7L173.8 207.9L178 178.7L181.4 159L183 151.5L184.4 146Z"/><path id="c54" d="M186.5 146L873 146L873 594.1L478.8 596.5L320.5 597.2L226.5 597.3L188.5 597.1L167.8 596.5L161.2 596L157 595.4L153.6 594.5L151 593.2L149.4 591.8L148.2 590L147.4 587.5L146.8 584.5L146.4 580.5L146.2 575.2L146.4 560L148 521L150.8 469.8L153.8 422.2L157 377.9L160 342.1L163.2 307.8L166.8 275L170.8 241.5L175.5 206.4L180 177L183.5 158L185 151.5L186.5 146Z"/><path id="c55" d="M188.4 146.5L188.6 146L873 146L873 593.8L494.9 596.2L326.1 597L228.5 597.2L190.5 597L169 596.4L162.8 595.9L157.8 595.2L154 594.2L151.5 593L149.9 591.5L148.7 589.8L147.8 587.2L147.2 584.2L146.8 580L146.6 574.8L146.8 559L148.5 520.3L151.3 471L154.5 421.5L158 375.8L161.2 339L164.5 306.3L168.2 272.8L172.2 240.9L177 207.1L181.5 178.8L185.1 159.5L186.8 152.5L188.4 146.5Z"/><path id="c56" d="M190.9 146L873 146L873 593.5L507.9 596L343.5 596.8L230 597L191 596.8L170.3 596.2L163.6 595.8L158.3 595L154.6 594L152.1 592.8L150.5 591.4L149.2 589.5L148.3 587L147.7 583.8L147.3 579.5L147.1 574L147.3 558L149 520.1L152 468.7L155.2 421.3L159 374.4L162.2 339.1L166 303.1L169.8 271.2L174 238.9L179 205.1L183.9 176L187.5 158.1L189.2 151.5L190.9 146Z"/><path id="c57" d="M193.2 146L873 146L873 593.2L518.2 595.8L342 596.6L232 596.9L192.5 596.7L170.5 596L163.8 595.5L158.8 594.8L155.2 593.8L152.7 592.5L151 591L149.7 589L148.8 586.5L148.1 583.2L147.7 579L147.5 573.5L147.8 557.5L149.5 520.4L152.8 466.9L156.2 418.3L160 373.6L163.5 337.3L167.2 302.9L171.5 268.4L176 235.9L181 203.8L186 175.4L189.7 158L191.4 151.5L193.2 146Z"/><path id="c58" d="M195.7 146L843.1 146L873 150.4L873 592.9L675.6 594.5L484 595.8L333.3 596.5L234.5 596.7L194.1 596.5L172 595.9L164.8 595.3L159.8 594.6L156 593.6L153.3 592.2L151.6 590.8L150.2 588.8L149.2 586.1L148.6 582.8L148.2 578.5L148 572.8L148.3 556L150.2 516.7L153.5 465.8L157.2 416.1L161.2 370.7L165 333.8L169 299.1L173.2 266.3L178 233.7L183.5 200.2L188.4 174L192.1 157.5L194 151L195.7 146Z"/><path id="c59" d="M198.4 146L797.2 146L834.5 151.9L873 157.6L873 592.6L674.7 594.2L491.6 595.5L342 596.3L236.5 596.6L196 596.3L173.5 595.7L166.5 595.2L161 594.4L157 593.4L154 592L152.2 590.5L150.8 588.3L149.8 585.5L149.1 582.2L148.7 578L148.5 572.2L148.8 555.5L150.8 518L154.2 465.2L158 417.4L162.2 371.1L166 335.5L170.2 300L174.8 266.7L179.5 235.4L185 203L190.5 174.5L192.5 165.5L194.5 157.7L196.5 151.1L198.4 146Z"/><path id="c60" d="M201 146.5L201.2 146L753.6 146L811.5 155.5L873 164.8L873 592.3L672.2 594L496.8 595.2L341.5 596.1L239 596.4L198 596.2L174.6 595.5L167.7 595L162 594.2L158 593.2L154.8 591.7L152.8 590L151.4 588L150.4 585.2L149.7 581.8L149.2 577.2L149.1 571.2L149.4 554L151.5 515.7L155.2 461.9L159.2 413.6L163.5 369.5L167.5 333.4L171.8 299.5L176.5 265.9L181.5 234.4L187.5 200.8L192.9 174.5L195 165.3L197 157.8L199 151.5L201 146.5Z"/><path id="c61" d="M203.9 146.5L204.1 146L712.3 146L750 152.7L789 159.2L830 165.7L873 172L873 591.9L698.3 593.5L499.8 595L339.5 595.9L239.5 596.2L198.5 595.9L175.2 595.2L167.8 594.7L162.2 593.9L158.2 592.8L155.2 591.3L153.5 589.8L152 587.5L150.9 584.8L150.2 581L149.8 576.2L149.6 570L150.1 552L152.5 510.3L156.2 459.4L160.5 410.6L165 366.3L169.2 330L173.7 296L178.5 264.2L184 231.3L190 199.4L195.5 173.8L197.7 165L199.8 157.5L201.8 151.5L203.9 146.5Z"/><path id="c62" d="M207.3 146L673.2 146L719 154.6L767.5 163.1L819 171.3L873 179.3L873 591.5L691.6 593.2L500.6 594.8L340.5 595.7L242.5 596L200.5 595.7L187 595.5L176 595L168.5 594.4L163 593.5L159.1 592.5L156.1 591L154.1 589.2L152.6 587L151.5 584L150.8 580.2L150.4 575.2L150.2 569L150.8 550.8L153.2 509.5L157.2 457.7L161.8 408.4L166.5 364L170.8 329.4L175.5 295.2L181 260.2L186.5 229.1L193 196.4L198.5 172.2L200.8 163.5L203 156.5L205 151L207.3 146Z"/><path id="c63" d="M210.3 146.5L210.6 146L636 146L662 151.3L689.5 156.7L717.5 161.8L746.5 166.9L807.5 176.9L873 186.7L873 591.1L683.4 593L499.5 594.5L339 595.5L243.5 595.8L200.7 595.5L187.5 595.2L177.1 594.8L169.5 594.1L163.9 593.2L159.8 592.1L156.8 590.6L154.7 588.8L153.2 586.5L152.2 583.5L151.4 579.5L151 574.5L150.9 568L151.5 549L154 509.4L158.2 456.6L162.8 409.4L167.8 364.6L172.5 327.6L177.5 293.3L183 260L188.5 230.2L195 198.8L201 173.4L203.4 164.5L205.7 157.5L208 151.5L210.3 146.5Z"/><path id="c64" d="M213.9 146.5L214.2 146L600.8 146L630 152.4L661 158.7L693 164.9L726 170.9L760.5 176.8L796.5 182.7L834 188.4L873 194.1L873 590.7L673.9 592.8L496.5 594.2L341.7 595.2L246.5 595.5L202.5 595.3L189.5 595L178.6 594.5L171 593.9L165.2 593L160.8 591.8L157.7 590.2L155.5 588.3L154 586L152.9 583L152.1 579L151.7 573.8L151.6 567L152.2 547.5L155 506.5L159.5 453.5L164.2 406.3L169.5 361.7L174.3 326.6L179.5 292.3L185.5 257.7L191.5 227L198.5 195.1L204.3 172L206.8 163.5L209.1 157L211.5 151.1L213.9 146.5Z"/><path id="c65" d="M217.9 146L567.3 146L599.5 153.5L633.5 160.8L668.5 167.9L706 175L745 181.8L786 188.6L828.5 195.2L873 201.7L873 590.3L688.5 592.2L522.8 593.8L354 594.9L247.5 595.3L204.5 595L191 594.7L180.3 594.2L172 593.6L166.2 592.7L161.8 591.4L158.4 589.8L156.2 587.8L154.7 585.2L153.5 582L152.8 578L152.4 572.8L152.3 566L153.1 546L154.2 527.5L156 504.5L160.8 451.3L165.8 404.1L171.2 359.7L176.5 323L182 289.1L188 256.3L194.5 224.8L201.5 194.5L205 180.9L207.9 170.5L210.5 162.5L212.9 156L215.4 150.5L217.9 146Z"/><path id="c66" d="M222 146L535.5 146L570.5 154.7L607.5 163.1L646 171.2L687 179.2L730 187L775.5 194.6L823.5 202.1L873 209.3L873 589.8L699.6 591.8L515 593.5L353.5 594.7L249.5 595L206.1 594.8L192 594.4L181 593.9L173.2 593.2L167 592.2L162.6 591L159.2 589.3L157.1 587.2L155.5 584.7L154.3 581.2L153.6 577L153.2 571.5L153.1 564.5L153.4 555.5L154 543.5L155.3 525L157.2 500.4L162.2 447.5L167.5 400.7L173.2 356.8L178.5 322L184.5 286.9L191 253.3L198 221.3L205.1 192.5L208.5 179.9L211.5 169.9L214 162.5L216.6 156L219.3 150.5L222 146Z"/><path id="c67" d="M226 146.5L226.3 146L505.3 146L542 155.7L581.5 165.3L623 174.4L667.5 183.4L714.5 192.1L764.5 200.6L817 208.9L873 217L873 589.3L684.4 591.5L505.5 593.2L356.5 594.4L254 594.7L210 594.5L195 594.2L183.5 593.7L175.5 593L168.7 592L164.1 590.8L162.2 590L160.5 589L158.2 587L156.5 584.4L155.3 581L154.5 576.8L154.1 571.2L154 564L154.2 555L154.8 543.5L156.2 523.8L158.2 500.1L163.2 449.4L168.8 402.2L171.8 379.4L175 356.6L180.5 321.8L186.5 288.2L193 256L200.5 223L208 193.8L211.5 181.4L214.9 170.5L217.6 163L220.3 156.5L223.1 151L226 146.5Z"/><path id="c68" d="M231 146L476.6 146L496 151.7L515.5 157L536 162.4L557 167.6L579 172.8L601.5 177.9L649 187.8L699.5 197.4L754 206.8L811.5 215.9L873 224.9L873 588.7L690.1 591L521.5 592.8L367.5 594L256 594.4L211 594.2L195.5 593.8L184.5 593.3L175.7 592.5L169.5 591.5L165 590.2L161.5 588.4L159.1 586.2L157.3 583.5L156.1 580L155.3 575.5L154.9 569.5L154.9 562L155.2 552.4L156 540L157.5 520.3L159.8 495.3L165 445.2L168 420L171 396.8L174.2 373.7L177.5 352.3L183.5 316.7L190 282.7L197 250.3L205 217.5L209 202.6L213 188.5L216.5 177.2L219.5 168.5L222.2 161.5L225 155.5L227.8 150.5L231 146Z"/><path id="c69" d="M235.6 146.5L236 146L449.2 146L469 152.2L489.5 158.2L511 164.2L533.5 170.1L556.5 175.8L580.5 181.4L605 186.9L631 192.3L658 197.7L685.5 202.9L714.5 208.2L744 213.2L806.5 223.2L873 232.9L873 588.1L692.7 590.5L507.7 592.5L355.7 593.8L258 594.1L212 593.8L197.5 593.5L186 592.9L177.5 592.2L170.8 591.1L166 589.7L162.5 587.8L161.2 586.8L160 585.5L158.3 582.8L157 579L156.3 574.5L155.9 568.5L155.9 560.5L156.3 551L157.1 538.5L158.8 517.9L161 494.1L163.8 468L166.5 444.2L169.5 420.2L172.8 396.2L176 374.2L179.5 352.2L186 315.5L193 280.9L200.5 248.1L208.5 217.1L216.5 189.5L220.1 178.5L223.5 168.9L226.5 161.6L229.3 156L232.2 151L235.6 146.5Z"/><path id="c70" d="M241 146.5L241.5 146L423.1 146L443.5 152.9L465 159.6L487.5 166.3L510.5 172.6L534.5 178.8L560 185.1L586 191.1L613 196.9L641.5 202.8L671 208.5L702 214.2L733.5 219.7L766.5 225.1L801 230.6L836 235.8L873 241L873 587.5L692.4 590L517.1 592L366 593.3L260.5 593.8L215 593.5L199 593.1L187.4 592.5L179 591.7L172.2 590.6L167.5 589.2L165.3 588.2L163.7 587.2L161.2 585L159.4 582L158.1 578.2L157.3 573.5L157 567.5L157 559.5L157.4 549L158.3 536.5L160 516.5L162.5 491.5L165.2 466.7L168.5 440.1L171.8 415.7L175 393.2L178.5 370.8L182 350.1L188.5 315.3L196 280.1L200 263L204 247L208 231.8L212.5 215.8L217 200.7L221 188.2L224.7 177.5L228.1 168.5L231.2 161.5L234.4 155.5L237.7 150.5L241 146.5Z"/><path id="c71" d="M246.8 146.5L247.3 146L398.2 146L419 153.5L441 160.9L464 168.1L488 175.2L513.5 182.1L539.5 188.7L567 195.3L595.5 201.7L625.5 208.1L656.5 214.2L689 220.3L723 226.3L758.5 232.2L795.5 238.1L833.5 243.8L873 249.4L873 586.8L689.2 589.5L522.7 591.5L365 593L263.5 593.4L216.5 593.1L201.5 592.7L189.5 592.1L180.5 591.2L174 590.2L169 588.7L166.8 587.8L165 586.6L163.6 585.5L162.4 584.2L160.6 581.2L159.2 577.3L158.5 572.5L158.1 566L158.2 558L158.7 547.5L159.6 534.5L161.5 513.6L164 490L167 464.4L170.2 439.1L173.5 415.9L177 392.8L180.5 371.5L184.5 349L191.5 313.6L195.5 295.3L199.5 278.1L203.5 262L208 245L212.5 229L217 213.9L221.5 199.7L226 186.5L229.9 176L233.2 168L236.5 161.1L239.7 155.5L243.3 150.5L246.8 146.5Z"/><path id="c72" d="M253.2 146.5L253.8 146L374.4 146L395.5 154.2L418 162.3L441.5 170.2L466.5 177.9L492.5 185.3L520 192.7L548.5 199.8L578.5 206.7L610 213.6L643 220.3L677 226.7L713 233.2L750 239.4L789.5 245.7L830 251.8L873 257.9L873 586.1L701.3 588.8L524.7 591L371.9 592.5L267 593L220 592.7L203.5 592.3L192 591.7L182.5 590.8L175.5 589.6L170.2 588L168 587L166.4 586L165 584.9L163.8 583.5L161.9 580.5L160.5 576.5L159.7 571.2L159.3 564.5L159.4 556L160 545.5L161.1 532L163 512L165.8 487.3L168.8 463.1L172.2 437.3L176 412.1L179.5 390.4L183.5 367.5L187.5 346.4L191 329.2L195 310.7L199 293.5L203.5 275.3L208 258.4L212.5 242.4L217 227.4L222 211.7L226.5 198.4L231 185.9L235 175.8L238.7 167.5L242 161L245.5 155.4L249.3 150.5L253.2 146.5Z"/><path id="c73" d="M260.2 146.5L260.8 146L355.3 146L372 154.6L381 158.2L394.5 163.3L409 168.6L438.5 178.5L466.5 187.1L495.5 195.3L526 203.3L558.5 211.2L591.5 218.6L626 225.8L662 232.8L700.5 239.8L740.5 246.7L782.5 253.4L827 260.1L873 266.6L873 585.3L691.9 588.2L523.2 590.5L375 592L270 592.6L222.5 592.2L205.5 591.8L193.5 591.1L184.4 590.2L177.1 589L171.8 587.3L169.8 586.4L167.9 585.2L166.4 584L165.2 582.8L164.1 581.2L163.2 579.5L161.8 575.2L161 569.7L160.7 563L160.9 554L161.5 543L162.8 528.5L165 506.9L168 481.9L171.2 457.5L175 431.7L178.5 409.7L182.5 386.4L186.5 364.9L191 342.6L195 324.2L199 307.1L203.5 289L208 272L212.5 256.1L217.5 239.5L222.5 223.9L228 207.8L233 194.2L237.4 183L241.5 173.5L245 166.3L248.5 160.1L252 155L255.9 150.5L260.2 146.5Z"/><path id="c74" d="M267.8 146.5L268.5 146L337.5 146L355.5 155.7L375 165.6L392.5 172.3L411.5 179.1L440.5 188.7L471 197.9L503.5 206.8L538.5 215.7L573.5 223.8L610 231.7L648 239.2L688.5 246.8L731.5 254.2L776 261.4L823.5 268.6L873 275.6L873 584.5L712 587.2L538.1 589.8L380.3 591.5L273.5 592.1L225.5 591.7L208.5 591.3L196 590.6L186.5 589.7L179 588.4L173.7 586.7L171.6 585.8L169.6 584.5L168 583.2L166.8 581.9L165.6 580.2L164.7 578.5L163.3 574L162.5 568.5L162.2 561L162.4 552L163.2 540L164.5 525.9L167 503.5L170 480L173.5 455.2L177.5 429.3L181.5 405.6L185.5 383.8L190 361.2L194.5 340.3L198.5 323L203 304.8L207.5 287.8L212.5 270.1L217.5 253.6L223 236.5L228.5 220.5L234 205.5L239 192.8L243.5 182.1L247.5 173.4L251.5 165.8L255.5 159.5L259.3 154.5L263.5 150.1L267.8 146.5Z"/><path id="c75" d="M276.3 146.5L277 146L319.7 146L332.5 153.3L346 160.7L359.5 167.7L374 174.9L378.5 177.1L401.5 185.5L418 191.2L435.5 196.9L453.5 202.5L472 207.9L491 213.1L511 218.4L532 223.6L553.5 228.7L587 236.2L622.5 243.6L659.5 250.8L698 257.8L738.5 264.7L781 271.5L826 278.2L873 284.9L873 583.5L696.1 586.8L529.2 589.2L377.1 591L277 591.6L228 591.2L211.5 590.7L198.3 590L188.5 589L181.4 587.8L175.7 586L173.2 584.9L171.2 583.6L169.7 582.2L168.3 580.8L167.2 579L166.2 577.2L164.8 572.5L164 566.5L163.8 559L164.2 549L165.1 536.5L166.7 521L169.3 499.5L172.8 474.1L176.5 449.4L180.5 425.3L184.5 403.1L189 380.2L193.5 359L198.5 337.2L203 319.1L208 300.3L213 282.8L218 266.4L223.5 249.5L229 233.6L234.5 218.7L240.5 203.4L245.5 191.5L250.5 180.5L254.8 172L258.9 165L263 159L267 154.3L271.5 150L276.3 146.5Z"/><path id="c76" d="M287.6 146.5L288.2 146L300.8 146L306.5 149L331.5 163.3L350 173.1L364 180.2L379 187.4L382 188.8L388.5 191.2L417 201.1L447 210.6L479 219.8L513 228.8L549.5 237.6L588 246.2L629 254.6L672.5 262.9L718 270.9L767 278.9L818.5 286.7L873 294.4L873 582.5L706.3 585.8L534.7 588.5L382 590.4L281 591L253 590.9L231 590.6L214 590.1L201 589.4L191 588.3L183.5 587L180 586L177.5 585.1L175.3 584L173.2 582.7L171.6 581.2L170.2 579.8L169 577.9L168 575.8L167.1 573.2L166.5 570.6L165.8 564L165.7 555.5L166.2 544.5L167.4 531L169.2 514.7L172.2 492L176 466.8L180 442.5L184.5 417.5L189 394.6L194 371.3L199 349.8L204.5 328L209.5 309.6L215 290.9L220.5 273.4L226 257L232 240.2L238 224.6L244.5 208.7L251 193.9L256.2 183L260.9 174L265.1 167L269.3 161L273.6 156L278.5 151.5L281.3 149.5L284 147.8L285 147.3L286.5 147.6L287.6 146.5Z"/><path id="c77" d="M284.8 154.5L285.5 154.3L287 154.4L289.5 154.9L292 156.1L292.5 157.1L293 157.4L295 156.8L297.5 156.9L300 157.4L303.5 158.8L309 161.7L332 174.4L347 182.3L366 191.7L385.5 200.8L413 210.3L442.5 219.6L473.5 228.6L506 237.3L543 246.3L582.5 255.1L624.5 263.8L668.5 272.1L715 280.3L764.5 288.4L817 296.4L873 304.4L873 581.4L697.7 585L535.2 587.8L382 589.7L286 590.3L258 590.2L235.5 590L218.5 589.5L204.5 588.7L194 587.6L186 586.1L182.7 585.2L180 584.2L177.5 583L175.5 581.8L174 580.5L172.5 578.9L171.3 577.2L170.3 575.2L168.8 570.8L167.9 565L167.6 557.5L167.9 548.5L168.8 537.3L170.2 523.5L172.8 503.8L176 481.8L180 457.3L184 435.1L188.5 412L193 390.8L197.5 371.1L202.5 350.8L207 333.8L211.5 317.8L216.5 301.2L221.5 285.5L227 269.4L232.5 254.2L238 239.9L244 225.2L250 211.3L256 198.3L261.9 186.5L267 177L271.6 169.5L276 163.4L280.5 158.3L284.8 154.5Z"/><path id="c78" d="M289.5 162.5L292 162.7L294 165.9L296 170L296.5 170.4L298.5 170.1L301 170.3L303.5 171L307 172.4L312.5 175.2L335 187.3L350.5 195.1L369.5 204.3L389 213.1L412.5 221.1L438 229.1L464.5 236.8L492.5 244.4L530.5 253.9L571 263.1L614 272.1L659.5 280.8L707.5 289.3L759.5 297.9L814.5 306.3L873 314.7L873 580.2L710.3 583.8L546.4 586.8L391 588.9L337 589.4L291.5 589.6L262.5 589.5L240 589.2L222.5 588.7L208 587.9L197 586.8L189 585.3L185.5 584.3L182.5 583.3L180 582L178 580.8L176.5 579.5L175 577.9L173.8 576.2L172.8 574.4L171.2 570L170.2 564.5L169.9 557.5L170.1 549L170.9 538L172.2 524.9L174.8 506.1L178 484.8L182 461.4L186 440L190.5 417.8L195 397.3L200 376.3L205 356.8L209.5 340.4L214.5 323.3L219.5 307.3L224.5 292.3L230 276.7L235.5 262.1L241 248.2L247 234L254 218.4L261 203.8L267.5 191.1L273.5 180.5L279 171.9L284 165.4L285 164.3L286.5 163.4L288 162.8L289.5 162.5Z"/><path id="c79" d="M291.7 172L292 171.9L293.5 172.9L295.5 175.3L297.5 178.8L300 184L302 183.9L304.5 184.2L307 185L310 186.2L315.5 188.9L338.5 200.8L354 208.4L373 217.2L393 226L413.5 232.8L436 239.8L459.5 246.6L483.5 253.2L522 262.9L563 272.3L607.5 281.6L654 290.6L703 299.4L756.5 308.2L812.5 316.8L873 325.4L873 578.8L716 582.5L551 585.8L402.9 588L348.5 588.6L298.5 588.8L268.5 588.8L245 588.5L226.5 587.9L212 587.1L201 585.9L192.5 584.4L189.1 583.5L186 582.4L183.5 581.2L181 579.8L179.4 578.5L177.9 577L176.6 575.2L175.5 573.4L174.6 571.2L173.8 569L172.8 563.5L172.4 557L172.5 548.8L173.2 539L174.4 527L177 508.2L180 489.2L183.5 469.3L187.5 448.5L192 426.9L196.5 406.9L201.5 386.4L206.5 367.4L211 351.4L215.5 336.3L220.5 320.5L225.5 305.7L230.5 291.6L236 277.1L241.5 263.3L247.5 249.2L254.5 233.7L261.5 219.1L268.5 205.4L275.5 192.7L280.5 184.3L285 177.5L286.7 175.5L288.5 173.8L290 172.8L291.7 172Z"/><path id="c80" d="M293.4 184L294.5 184L295.5 184.4L296.5 185.1L298 186.8L300.5 191L304 198.2L306 198.3L308 198.7L310.5 199.5L314 200.9L352.5 219.7L368 226.9L384.5 234.1L397.5 239.6L417 245.9L447 254.8L479 263.6L517.5 273.3L559 282.8L603.5 292.2L650.5 301.3L701 310.3L754.5 319.1L811 327.8L873 336.8L873 577.2L715.3 581.2L562.4 584.5L411.3 587L356.5 587.6L307 587.9L276 587.9L251.5 587.6L232 587L217.5 586.2L205.5 585L196.7 583.5L193 582.5L189.9 581.5L187 580.2L184.5 578.8L182.8 577.5L181.2 576L178.8 572.8L177.8 570.8L177 568.5L175.8 563.5L175.3 557.5L175.2 550L175.7 541L176.8 530L178.8 515L181.5 498L185 478.3L189 457.9L193.5 436.8L198 417.4L202.5 399.3L207.5 380.5L212 364.8L216.5 349.9L221 335.8L226 321.1L231 307.2L236.5 292.7L242 279.1L247.5 266.1L254 251.7L261 237.1L268 223.3L275 210.4L282 198.3L287 190.5L289 187.8L291 185.5L292 184.5L293.4 184Z"/><path id="c81" d="M296 197L297 196.8L298.5 197.2L300 198.3L301.5 200L303 202.4L304.5 205.2L308 213.1L312.5 214L318 216.1L349 230.8L372 241.1L387.5 247.7L402 253.6L419.5 259.1L437 264.3L455 269.4L474.5 274.6L514 284.5L556 294.2L601 303.6L648 312.7L698.5 321.7L753 330.8L811 339.7L873 348.7L873 575.4L718.1 579.8L566 583.2L416 585.9L363 586.6L315.5 586.9L284 586.9L258.5 586.6L238.5 586L223 585.2L210.6 584L201 582.4L197 581.3L193.7 580.2L190.8 579L188.2 577.5L185 574.9L182.5 571.8L181.5 570L180.5 567.6L179.3 563L178.6 557.5L178.4 550.5L178.7 542L179.7 532L181.5 518.1L184 502.5L187 486L191 466.1L195 447.8L199.5 428.8L204 411.1L209 392.7L213.5 377.2L218 362.7L222.5 348.9L227.5 334.4L232.5 320.7L238 306.5L243.5 293.1L249 280.3L255.5 266.1L262.5 251.7L269.5 238.2L276.5 225.4L284 212.5L289.5 203.8L293 199.2L294.5 197.8L296 197Z"/><path id="c82" d="M299.2 210.5L300.5 210.3L302 210.7L303.5 211.8L305 213.5L307 216.8L310 223L313 228.6L313.5 229.2L317 230.1L322 232L350 244.7L366 251.8L386 260.2L406.5 268.3L436.5 277.2L468 285.8L507.5 295.8L549.5 305.4L594.5 314.9L643 324.3L695 333.7L749.5 342.8L809.5 352.1L873 361.5L873 573.4L722.5 578L573.2 581.8L428 584.6L370.5 585.4L325 585.7L292 585.8L266 585.5L245 584.9L228.5 584L215.7 582.8L206 581.1L202 580.1L198.5 579L195.5 577.8L192.5 576.1L189.1 573.5L186.5 570.4L184.5 566.5L183.1 562L182.3 556.5L182 550L182.3 542L183.1 533L184.6 521L187 506.4L190 490.3L193.5 473.4L197.5 455.7L202 437.3L206.5 420.2L211.5 402.4L216 387.4L220.5 373.3L225.5 358.5L230.5 344.5L235.5 331.3L241 317.5L246.5 304.4L252 292.1L258.5 278.3L265.5 264.2L272.5 251L280 237.7L287.5 225.1L293 216.7L296.5 212.4L298 211.1L299.2 210.5Z"/><path id="c83" d="M303.4 224.5L304.5 224.5L306 225L307 225.8L308.5 227.5L313.5 234.8L316.5 240.2L319.5 246.1L320 246.5L323.5 247.7L328 249.5L355.5 261.4L375.5 269.8L393 276.8L411.5 283.9L435 290.7L459 297.2L499 307.3L542 317.2L587 326.8L636 336.4L688 345.8L744.5 355.4L806.5 365.2L873 375.1L873 571L734.4 575.8L591.5 579.8L517.2 581.5L443 583L380.3 584L337 584.4L303 584.4L275.5 584.2L253.5 583.6L236.3 582.8L222.8 581.5L211.9 579.8L207.7 578.8L203.7 577.5L200.5 576.2L197.5 574.6L194 572L191.3 569L190 567L189 565.1L187.5 560.6L186.6 555L186.2 549L186.4 542L187.1 533.5L188.5 522.3L190.6 509.5L193.5 494.3L197 478.1L201 461.1L205 445.4L209.5 428.9L214.5 411.8L219 397.3L224 382.2L229 367.9L234 354.5L239.5 340.5L245 327.2L250.5 314.7L256.5 301.7L263.5 287.4L271 273.1L278.5 259.6L286 246.8L292.8 236L297.5 229.3L300.6 226L302 225L303.4 224.5Z"/><path id="c84" d="M307 239.5L308 239.4L309 239.6L311 240.6L313 242.2L315 244.5L319 250.4L327 264.7L327.5 265.3L334.5 268L359 278.2L377 285.4L396 292.7L415 299.8L425 302.8L447.5 308.9L488 319.2L531.5 329.4L578 339.3L628 349.2L680.5 358.9L738.5 368.8L802.5 379.2L873 390L873 568.2L810.6 570.8L742 573.2L673.7 575.5L597.5 577.8L520.4 579.8L453 581.2L394 582.3L350 582.8L315 582.9L286 582.7L263 582.2L244.5 581.2L230 579.9L224 579.1L218.5 578.1L213.7 577L209.7 575.8L206 574.3L203.1 572.8L199.5 570.2L196.5 567L194.3 563.5L192.8 559.5L191.7 554.5L191.2 548.5L191.2 542L191.7 534L193 523.7L194.9 512L197.5 498.7L200.5 485.1L204.5 468.6L208.5 453.5L213 437.6L217.5 422.7L222 408.7L227 394.1L232 380.2L237 367.2L242.5 353.5L248 340.7L253.5 328.5L259.5 315.8L266.5 301.9L274 287.9L281.5 274.7L289.5 261.4L296 251.3L300.9 244.5L304.2 241L305.5 240.1L307 239.5Z"/><path id="c85" d="M310.7 255.5L312 255.1L313 255.1L315 255.6L317 256.8L319.5 259.3L322.5 263L325 266.6L336 285L337 286L372 299.7L397.5 309.3L422.5 318.2L432.5 320.9L474 331.6L517.5 341.9L565 352.2L615.5 362.4L668.5 372.3L728 382.8L793.5 393.8L873 406.5L873 564.7L815.6 567.5L756.3 570L690.3 572.5L616.1 575L540.1 577.2L471.3 579L412 580.2L362.5 581L327 581.1L297 580.9L273 580.4L254 579.5L238.5 578.1L226.5 576.3L221.8 575.2L217.4 574L213.4 572.5L210 570.9L206.4 568.5L203.3 565.5L200.8 562L199 558L197.8 553.5L197.1 548L196.9 542L197.2 535L198.1 526.5L199.7 516.5L201.9 505L204.5 492.9L207.9 479L211.5 465.6L216 450L220.5 435.5L225 421.8L230 407.6L235 394.1L240 381.4L245.5 368.1L251 355.6L257 342.6L263 330.3L270 316.8L277.5 303.1L285 290.2L292.5 278.1L299 268.2L304 261.3L307.5 257.5L309 256.3L310.7 255.5Z"/><path id="c86" d="M316.3 272L318.5 271.9L321 272.8L323.5 274.4L326.5 277.3L329.5 281L334.5 288L338.5 294L343.5 300.2L349.5 309.1L350 309.4L391.5 324.6L429 337.6L469.5 347.8L512 357.8L558 367.8L607 377.8L658.5 387.7L714 397.8L776 408.7L873 425.3L873 560L828 563L780.4 565.5L714.7 568.5L645.9 571.2L574.9 573.8L500.6 576L430.8 577.8L374 578.8L339.5 579L308 578.8L283 578.3L263.5 577.3L247.5 575.9L235.1 574L230 572.9L225.5 571.6L221.5 570.1L218 568.5L214 566L211 563.3L208.4 560L206.5 556.4L205.1 552L204.2 547L203.8 541.5L204 535L204.7 527L206 518L207.9 508L210.2 497.5L213 486.2L216.5 473.5L220.5 460L225 445.9L229.5 432.8L234.5 419L240 404.8L245.5 391.4L251 378.8L257 365.7L263 353.4L269 341.7L276.5 327.8L284.5 314L292.5 300.9L300.5 288.7L306 281L310 276.2L312 274.3L313.5 273.2L315 272.4L316.3 272Z"/><path id="c87" d="M320.6 290.5L322 290.2L323.5 290.1L325 290.4L327 291L328.5 291.8L330.5 293.2L335 297.3L343.5 306.6L345.5 309.1L351 316.5L360.5 330.5L363.5 334.5L401 347.4L435.5 358.7L471 367.4L509 376.2L548 384.7L590.5 393.6L661.5 407.7L813.7 436.5L873 448.2L873 541.2L861.7 542.5L862.3 543L870.1 545.5L873 546.9L873 550.4L871.5 551.1L868.9 552L862.1 553.5L852 555L838.5 556.5L822.3 558L802.7 559.5L754.4 562.5L686.5 566L605.7 569.5L518 572.7L434 575.1L385.5 576.1L353 576.4L317 576.2L288 575.4L267 574.1L258.7 573.2L251 572.2L244.1 571L238 569.5L233.1 568L228.5 566.1L224.5 563.9L221 561.3L218.4 558.5L216 555L214.4 551.5L213.1 547L212.4 542L212.2 536.5L212.5 530L213.3 522.5L214.6 514.5L216.5 505L219 494.6L222 483.6L225.5 472L229 461L233.5 448L238.5 434.5L243.5 421.8L249 408.7L254.5 396.3L260.5 383.5L266.5 371.4L272.5 359.9L280 346.4L288 332.8L296 320L304 308L309.5 300.4L314 295L317.5 292L319 291.1L320.6 290.5Z"/><path id="c88" d="M326.4 310.5L328.5 310.3L330.5 310.4L333 311L335 311.8L337.5 313.1L341.5 315.6L344 317.5L346.5 319.7L351 324.5L355.5 329.9L366.5 344.4L377 358.9L380.5 362.8L424 376.7L443 382.7L479 391.2L515 399.3L583.5 414.3L722.6 443.5L754.6 450.5L780.8 456.5L809.5 463.5L831.9 469.5L851.8 475.5L867.6 481L873 483.2L873 520L859.4 524L844.6 527.5L824 531.5L799 535.6L798.2 536L807.5 538.5L813.5 540.5L818 542.5L819.6 543.5L820.5 544.5L820.9 545.5L820.8 546L820 547L817.5 548.4L814 549.5L809.7 550.5L804 551.5L787 553.8L763.1 556L730.2 558.5L699.4 560.5L655.2 563L604.7 565.5L559.3 567.5L507.7 569.5L455.2 571.2L409.5 572.5L372.5 573.1L349 573.2L324 572.9L303.5 572.3L287 571.4L273 570.1L261.2 568.5L251.5 566.5L243.4 564L238.8 562L234.6 559.5L231.4 557L228.6 554L226.5 550.8L224.8 547L223.5 542.6L222.8 538L222.6 532.5L222.8 526.5L223.5 520L224.8 512.5L226.5 504.2L228.7 495.5L231.5 485.6L234.5 476L238.8 463.5L243.5 450.8L248.5 438.3L254 425.4L259.5 413.3L265.5 400.8L272 388.1L278.5 376.1L286.5 362.2L294.5 349.1L303 336L310.5 325.3L315.5 318.8L319.5 314.5L321.3 313L323 311.8L324.5 311.1L326.4 310.5Z"/><path id="c89" d="M331.7 333L334 332.7L337 332.8L340 333.4L343.5 334.5L346.5 335.7L349.5 337.3L352.5 339.2L355.5 341.6L359.5 345.3L365.5 351.6L371 358.1L377 365.7L393.5 384.5L406 395.9L408 397.5L408.5 397.7L451.5 410.8L598.7 445L635.7 454L664.8 461.5L689.8 468.5L710.6 475L727.3 481L734.6 484L740 486.5L745.7 489.5L749.8 492L753.8 495L756.3 497.5L758.1 500L759 502.5L759 505L758.2 507.5L756.4 510L753.5 512.5L749.6 515L745.7 517L739.7 519.5L734.1 521.5L718.5 526L719.5 526.1L720.3 526.5L732.2 530L743.5 533.8L750.9 536L755.1 537.5L758.2 539L759.6 540L760.3 541L760.5 541.5L760.2 542.5L759.3 543.5L757.5 544.5L753.1 546L746.6 547.5L735.5 549.5L724.5 551L710.8 552.5L676 555.5L624.3 559L561.3 562.5L495 565.5L427 567.9L387.5 568.9L362 569.1L333.5 568.7L309 567.7L290 566.1L281.5 565.1L274.8 564L268 562.6L262.5 561.1L257.6 559.5L253 557.5L249.4 555.5L245.9 553L243.2 550.5L240.8 547.5L238.8 544L237.5 540.5L236.5 536.5L235.9 532L235.7 527L236 521.5L236.7 515.5L238 508.5L239.5 501.5L241.5 494L244 485.8L247 476.8L251 466L255 455.9L260 444.1L265 433.2L270.5 421.9L276 411.2L282 400.1L288.5 388.8L296 376.4L303.5 364.8L311 353.8L317.5 344.9L321.5 340.1L325.1 336.5L328.5 334.2L331.7 333Z"/><path id="c90" d="M337.3 358.5L340 358.1L343 358.1L346.5 358.7L350 359.5L354 360.7L358 362.3L361.5 364L365 366.1L369 369L373.5 373L384 383.4L394 394.2L415 414L422.5 419.3L443.5 433.3L454 438.3L477.5 451L507.4 459L533.4 466.5L553.8 473L571.6 479.5L580.1 483L586.5 486L592.2 489L597 492L600.9 495L603.8 498L605.4 500.5L606.4 503.5L607.5 503.7L607.8 504L620 507.8L641.8 513.5L655.8 517.5L671.7 522.5L681.8 526L690.2 529.5L693 531L695.3 532.5L697 534L697.8 535L698.1 536.5L697.8 537.5L696.9 538.5L695.5 539.5L692.1 541L687.2 542.5L679.5 544.2L668.4 546L657 547.5L628.1 550.5L585.1 554L531 557.5L472 560.5L423.1 562.5L389 563.4L366 563.7L344.5 563.2L323.5 562L306 560.3L298.5 559.3L291.3 558L284.7 556.5L279.5 555L275 553.4L270.7 551.5L267 549.5L263.5 547L260.8 544.5L258.7 542L256.8 539L255.4 536L254.2 532.5L253.4 528.5L253 524L253 519.5L253.4 514.5L254.1 509L255.3 503L256.8 497L258.7 490.5L261 483.4L264.1 475L267.9 465.5L272 456.1L276.5 446.5L281.5 436.5L286.5 427.1L292 417.3L298 407.2L304.5 396.8L311.5 386.3L318.5 376.3L324 369.1L327.6 365L331 361.8L334 359.8L337.3 358.5Z"/><path id="c91" d="M345.1 388L348.5 387.7L352 388L356.5 388.8L362 390.1L367.5 391.8L372 393.5L375.5 395.1L380 397.6L385 401L390 405L401.5 415.2L415 427.9L418.5 430.7L427 436.7L443.5 446.7L454 451.3L501.5 474.9L525 485.6L549 495.2L567.5 501.5L585.2 508L603 515L611.1 518.5L617.7 522L622.8 525.5L624.1 527L624.6 528L624.7 529.5L624.3 530.5L623.5 531.5L622.3 532.5L618.5 534.4L614.2 536L608.6 537.5L601.6 539L593.1 540.5L571.3 543.5L542.6 546.5L506.5 549.5L460 552.6L419.5 554.6L392.5 555.4L372.5 555.7L359 555.4L344 554.4L327.3 552.5L320.5 551.4L314 550.1L308 548.6L303 547.1L298.6 545.5L294.3 543.5L290.7 541.5L287.9 539.5L285.5 537.5L283 534.9L281 532.1L279.5 529.5L278.3 526.5L277.3 523L276.7 519.5L276.4 516L276.4 512L276.8 507.5L277.5 503L278.5 498L281.5 487.3L284.1 480L287.1 472.5L290.5 464.7L294.5 456.4L298.8 448L303.5 439.6L308.5 431.1L313.9 422.5L319.5 414L324.5 406.8L329 400.8L333 395.9L336 392.9L339 390.5L342 388.9L345.1 388Z"/><path id="c92" d="M353.1 425.5L356.5 425.1L360.5 425.3L365.5 426L372.5 427.5L380 429.4L386 431.3L390.5 433.1L395.5 435.5L400 438.1L404 440.8L408 443.8L415 449.7L420 453.6L425 457.2L429 459.6L443.5 467.3L454 471.6L488.5 488L508.8 498.5L517.6 503.5L522.2 506.5L526.2 509.5L528.6 511.5L530 513L531.4 515L532 516.5L532.1 518.5L531.5 520L529.8 522L527.6 523.5L524.5 525.1L521 526.5L512.5 529L500 531.6L485 534L459 537.3L437.5 539.4L416 541L398 541.9L382.5 542.3L371.5 542.3L363 541.8L353.5 540.5L343.5 538.2L334.9 535.5L328 532.4L325 530.7L322.4 529L320 527L318 525.1L316.2 523L314.8 521L313.3 518.5L312.2 516L311.4 513.5L310.8 510.5L310.4 507.5L310.3 504.5L310.7 498L312 491L313.3 486L315 481L317.1 475.5L319.4 470L325.4 458L332.4 446L338.5 437L341 433.9L343.5 431.1L345.9 429L348 427.5L350.5 426.3L353.1 425.5Z"/></defs>
<g stroke="none"><use href="#c0" fill="#00008f"/><use href="#c1" fill="#00009f"/><use href="#c2" fill="#00009f"/><use href="#c3" fill="#0000af"/><use href="#c4" fill="#0000bf"/><use href="#c5" fill="#0000bf"/><use href="#c6" fill="#0000cf"/><use href="#c7" fill="#0000df"/><use href="#c8" fill="#0000df"/><use href="#c9" fill="#0000ef"/><use href="#c10" fill="#0000ff"/><use href="#c11" fill="#0000ff"/><use href="#c12" fill="#0010ff"/><use href="#c13" fill="#0010ff"/><use href="#c14" fill="#0020ff"/><use href="#c15" fill="#0030ff"/><use href="#c16" fill="#0030ff"/><use href="#c17" fill="#0040ff"/><use href="#c18" fill="#0050ff"/><use href="#c19" fill="#0050ff"/><use href="#c20" fill="#0060ff"/><use href="#c21" fill="#0070ff"/><use href="#c22" fill="#0070ff"/><use href="#c23" fill="#0080ff"/><use href="#c24" fill="#008fff"/><use href="#c25" fill="#008fff"/><use href="#c26" fill="#009fff"/><use href="#c27" fill="#009fff"/><use href="#c28" fill="#00afff"/><use href="#c29" fill="#00bfff"/><use href="#c30" fill="#00bfff"/><use href="#c31" fill="#00cfff"/><use href="#c32" fill="#00dfff"/><use href="#c33" fill="#00dfff"/><use href="#c34" fill="#00efff"/><use href="#c35" fill="#00ffff"/><use href="#c36" fill="#00ffff"/><use href="#c37" fill="#10ffef"/><use href="#c38" fill="#10ffef"/><use href="#c39" fill="#20ffdf"/><use href="#c40" fill="#30ffcf"/><use href="#c41" fill="#30ffcf"/><use href="#c42" fill="#40ffbf"/><use href="#c43" fill="#50ffaf"/><use href="#c44" fill="#50ffaf"/><use href="#c45" fill="#60ff9f"/><use href="#c46" fill="#70ff8f"/><use href="#c47" fill="#70ff8f"/><use href="#c48" fill="#80ff80"/><use href="#c49" fill="#8fff70"/><use href="#c50" fill="#8fff70"/><use href="#c51" fill="#9fff60"/><use href="#c52" fill="#9fff60"/><use href="#c53" fill="#afff50"/><use href="#c54" fill="#bfff40"/><use href="#c55" fill="#bfff40"/><use href="#c56" fill="#cfff30"/><use href="#c57" fill="#dfff20"/><use href="#c58" fill="#dfff20"/><use href="#c59" fill="#efff10"/><use href="#c60" fill="#ffff00"/><use href="#c61" fill="#ffff00"/><use href="#c62" fill="#ffef00"/><use href="#c63" fill="#ffef00"/><use href="#c64" fill="#ffdf00"/><use href="#c65" fill="#ffcf00"/><use href="#c66" fill="#ffcf00"/><use href="#c67" fill="#ffbf00"/><use href="#c68" fill="#ffaf00"/><use href="#c69" fill="#ffaf00"/><use href="#c70" fill="#ff9f00"/><use href="#c71" fill="#ff8f00"/><use href="#c72" fill="#ff8f00"/><use href="#c73" fill="#ff8000"/><use href="#c74" fill="#ff7000"/><use href="#c75" fill="#ff7000"/><use href="#c76" fill="#ff6000"/><use href="#c77" fill="#ff6000"/><use href="#c78" fill="#ff5000"/><use href="#c79" fill="#ff4000"/><use href="#c80" fill="#ff4000"/><use href="#c81" fill="#ff3000"/><use href="#c82" fill="#ff2000"/><use href="#c83" fill="#ff2000"/><use href="#c84" fill="#ff1000"/><use href="#c85" fill="#ff0000"/><use href="#c86" fill="#ff0000"/><use href="#c87" fill="#ef0000"/><use href="#c88" fill="#ef0000"/><use href="#c89" fill="#df0000"/><use href="#c90" fill="#cf0000"/><use href="#c91" fill="#cf0000"/><use href="#c92" fill="#bf0000"/></g>
<g fill="none" stroke-width="1" shape-rendering="crispEdges"><use href="#c0"/><use href="#c1"/><use href="#c2"/><use href="#c3"/><use href="#c4"/><use href="#c5"/><use href="#c6"/><use href="#c7"/><use href="#c8"/><use href="#c9"/><use href="#c10"/><use href="#c11"/><use href="#c12"/><use href="#c13"/><use href="#c14"/><use href="#c15"/><use href="#c16"/><use href="#c17"/><use href="#c18"/><use href="#c19"/><use href="#c20"/><use href="#c21"/><use href="#c22"/><use href="#c23"/><use href="#c24"/><use href="#c25"/><use href="#c26"/></g>
<g fill="none" stroke-width="0.55"><use href="#c27"/><use href="#c28"/><use href="#c29"/><use href="#c30"/><use href="#c31"/><use href="#c32"/><use href="#c33"/><use href="#c34"/><use href="#c35"/><use href="#c36"/><use href="#c37"/><use href="#c38"/><use href="#c39"/><use href="#c40"/><use href="#c41"/><use href="#c42"/><use href="#c43"/><use href="#c44"/><use href="#c45"/><use href="#c46"/><use href="#c47"/><use href="#c48"/></g>
<g fill="none" stroke-width="0.7"><use href="#c49"/><use href="#c50"/><use href="#c51"/><use href="#c52"/><use href="#c53"/><use href="#c54"/><use href="#c55"/><use href="#c56"/><use href="#c57"/><use href="#c58"/><use href="#c59"/><use href="#c60"/><use href="#c61"/><use href="#c62"/><use href="#c63"/><use href="#c64"/><use href="#c65"/><use href="#c66"/><use href="#c67"/><use href="#c68"/></g>
<g fill="none"><use href="#c69"/><use href="#c70"/><use href="#c71"/><use href="#c72"/><use href="#c73"/><use href="#c74"/><use href="#c75"/><use href="#c76"/><use href="#c77"/><use href="#c78"/><use href="#c79"/><use href="#c80"/><use href="#c81"/><use href="#c82"/><use href="#c83"/><use href="#c84"/><use href="#c85"/><use href="#c86"/><use href="#c87"/><use href="#c88"/><use href="#c89"/><use href="#c90"/><use href="#c91"/><use href="#c92"/></g>
<path d="M137 146L147.2 146L148.6 173.5L150.1 212L151.8 283L152.5 359.5L152.5 424.5L151.9 490L150.9 545L149.5 585L149.9 589L150.5 590.2L151.4 591L154.5 591.8L161.2 592L350.5 590.4L873 587.8L873 600.5L137 600.5L137 146Z" fill="#000" stroke="none" fill-rule="evenodd"/>
<defs><linearGradient id="gfade" x1="240" y1="0" x2="430" y2="0" gradientUnits="userSpaceOnUse"><stop offset="0" stop-color="#000"/><stop offset="1" stop-color="#fff"/></linearGradient><mask id="mbrown" maskUnits="userSpaceOnUse" x="230" y="560" width="660" height="40"><rect x="230" y="560" width="660" height="40" fill="url(#gfade)"/></mask></defs>
<defs><linearGradient id="gbrown" x1="0" y1="0" x2="0" y2="1"><stop offset="0" stop-color="#b04000" stop-opacity="0"/><stop offset="0.55" stop-color="#b04a00" stop-opacity="0.35"/><stop offset="1" stop-color="#8a3c00" stop-opacity="0.8"/></linearGradient></defs>
<path d="M240 580L283.5 577.4L351 575.9L400 574.1L873.5 573.8L873.5 583.5L400 583.5L351 585.3L283.5 586.8L240 589.4Z" fill="url(#gbrown)" stroke="none" mask="url(#mbrown)"/>
<path d="M137 146L153.6 146L155 250L156 340L156.3 540L156.8 576L158.5 584L163 588.6L240 589L283.5 586.4L351 584.9L400 583.1L873.5 582.8L873.5 601L137 601Z" fill="#000" stroke="none"/>
<ellipse cx="401" cy="499.8" rx="17" ry="10.5" transform="rotate(17 401 499.8)" fill="#af0000"/>
<g font-size="8.6" text-anchor="middle" fill="#000" stroke="none"><text transform="translate(229.3,247.5) rotate(-70)" y="3.1">77</text><text transform="translate(239.2,237.0) rotate(-68)" y="3.1">78</text><text transform="translate(243.8,241.5) rotate(-67)" y="3.1">79</text><text transform="translate(252.3,238.5) rotate(-65)" y="3.1">80</text><text transform="translate(261.8,235.5) rotate(-64)" y="3.1">81</text><text transform="translate(262.5,251.7) rotate(-63)" y="3.1">82</text><text transform="translate(202.1,322.5) rotate(-76)" y="3.1">76</text><text transform="translate(238.8,323.0) rotate(-68)" y="3.1">83</text><text transform="translate(241.5,356.0) rotate(-68)" y="3.1">85</text><text transform="translate(269.0,364.0) rotate(-64)" y="3.1">87</text><text transform="translate(227.0,373.5) rotate(-71)" y="3.1">84</text><text transform="translate(308.1,227.0) rotate(51)" y="3.1">84</text><text transform="translate(320.8,253.5) rotate(60)" y="3.1">85</text><text transform="translate(331.4,277.5) rotate(59)" y="3.1">86</text><text transform="translate(341.7,298.0) rotate(52)" y="3.1">87</text><text transform="translate(356.9,333.0) rotate(55)" y="3.1">88</text><text transform="translate(355.7,340.0) rotate(53)" y="3.1">89</text><text transform="translate(362.0,359.0) rotate(50)" y="3.1">90</text><text transform="translate(384.0,392.4) rotate(47)" y="3.1">91</text><text transform="translate(395.1,386.0) rotate(43)" y="3.1">90</text><text transform="translate(443.5,446.7) rotate(28)" y="3.1">92</text><text transform="translate(463.0,475.8) rotate(26)" y="3.1">93</text><text transform="translate(541.5,546.6) rotate(-5)" y="3.1">92</text><text transform="translate(608.0,504.1) rotate(21)" y="3.1">91</text><text transform="translate(241.9,455.0) rotate(-69)" y="3.1">89</text><text transform="translate(245.7,480.5) rotate(-71)" y="3.1">90</text><text transform="translate(257.2,495.5) rotate(-74)" y="3.1">91</text><text transform="translate(281.8,486.5) rotate(-72)" y="3.1">92</text><text transform="translate(278.0,525.7) rotate(72)" y="3.1">92</text><text transform="translate(235.7,548.2) rotate(60)" y="3.1">90</text><text transform="translate(215.0,561.8) rotate(50)" y="3.1">88</text><text transform="translate(224.5,571.3) rotate(19)" y="3.1">87</text><text transform="translate(247.5,581.4) rotate(4)" y="3.1">85</text><text transform="translate(184.3,523.0) rotate(-82)" y="3.1">83</text><text transform="translate(166.5,523.0) rotate(-84)" y="3.1">76</text><text transform="translate(186.7,556.5) rotate(82)" y="3.1">84</text><text transform="translate(188.0,574.4) rotate(32)" y="3.1">81</text><text transform="translate(349.5,539.7) rotate(12)" y="3.1">93</text><text transform="translate(358.0,573.2) rotate(-0)" y="3.1">89</text><text transform="translate(511.0,558.6) rotate(-3)" y="3.1">91</text><text transform="translate(511.0,564.8) rotate(-2)" y="3.1">90</text><text transform="translate(493.0,573.4) rotate(-2)" y="3.1">88</text><text transform="translate(505.5,575.9) rotate(-2)" y="3.1">87</text><text transform="translate(450.0,581.3) rotate(-1)" y="3.1">85</text><text transform="translate(467.5,582.5) rotate(-1)" y="3.1">84</text><text transform="translate(527.0,577.6) rotate(-2)" y="3.1">86</text><text transform="translate(640.0,563.8) rotate(-3)" y="3.1">89</text><text transform="translate(672.0,579.2) rotate(-1)" y="3.1">80</text><text transform="translate(733.5,573.5) rotate(-2)" y="3.1">85</text><text transform="translate(751.0,575.2) rotate(-2)" y="3.1">84</text><text transform="translate(774.5,561.3) rotate(-3)" y="3.1">88</text><text transform="translate(788.0,565.1) rotate(-3)" y="3.1">87</text><text transform="translate(812.5,567.6) rotate(-3)" y="3.1">86</text><text transform="translate(845.8,576.2) rotate(-2)" y="3.1">82</text><text transform="translate(758.2,539.0) rotate(31)" y="3.1">90</text><text transform="translate(833.0,541.5) rotate(-11)" y="3.1">89</text><text transform="translate(158.8,545.0) rotate(-86)" y="3.1">72</text><text transform="translate(156.3,551.0) rotate(-87)" y="3.1">70</text><text transform="translate(161.7,541.0) rotate(-86)" y="3.1">74</text><text transform="translate(159.0,556.0) rotate(-88)" y="3.1">68</text><text transform="translate(179.5,445.4) rotate(-80)" y="3.1">77</text><text transform="translate(187.0,441.0) rotate(-80)" y="3.1">78</text><text transform="translate(185.3,443.5) rotate(-79)" y="3.1">79</text><text transform="translate(189.7,437.5) rotate(-78)" y="3.1">80</text><text transform="translate(194.3,433.5) rotate(-77)" y="3.1">81</text><text transform="translate(196.9,439.5) rotate(-77)" y="3.1">82</text><text transform="translate(817.0,580.2) rotate(-1)" y="3.1">80</text><text transform="translate(821.0,578.6) rotate(-2)" y="3.1">81</text><text transform="translate(825.0,576.9) rotate(-2)" y="3.1">82</text><text transform="translate(829.0,574.8) rotate(-2)" y="3.1">83</text><text transform="translate(822.0,572.9) rotate(-2)" y="3.1">84</text><text transform="translate(404.5,509.8) rotate(17)" y="3.1">94</text><text transform="translate(168.8,160.5) rotate(-83)" y="3.1">46</text><text transform="translate(170.1,160.5) rotate(-82)" y="3.1">47</text><text transform="translate(171.6,160.0) rotate(-82)" y="3.1">48</text><text transform="translate(173.0,160.0) rotate(-81)" y="3.1">49</text><text transform="translate(174.5,160.0) rotate(-81)" y="3.1">50</text><text transform="translate(176.1,160.0) rotate(-80)" y="3.1">51</text><text transform="translate(177.7,160.0) rotate(-80)" y="3.1">52</text><text transform="translate(179.5,159.5) rotate(-79)" y="3.1">53</text><text transform="translate(181.3,159.5) rotate(-79)" y="3.1">54</text><text transform="translate(183.2,159.5) rotate(-78)" y="3.1">55</text><text transform="translate(185.1,159.5) rotate(-78)" y="3.1">56</text><text transform="translate(187.3,159.0) rotate(-77)" y="3.1">57</text><text transform="translate(189.5,158.8) rotate(-76)" y="3.1">58</text><text transform="translate(191.7,159.0) rotate(-76)" y="3.1">59</text><text transform="translate(194.3,158.5) rotate(-75)" y="3.1">60</text><text transform="translate(196.8,158.5) rotate(-74)" y="3.1">61</text><text transform="translate(199.5,158.5) rotate(-73)" y="3.1">62</text><text transform="translate(202.5,158.0) rotate(-72)" y="3.1">63</text><text transform="translate(205.5,158.0) rotate(-71)" y="3.1">64</text><text transform="translate(208.9,157.5) rotate(-70)" y="3.1">65</text><text transform="translate(212.3,157.5) rotate(-69)" y="3.1">66</text><text transform="translate(216.0,157.4) rotate(-67)" y="3.1">67</text><text transform="translate(220.1,157.0) rotate(-66)" y="3.1">68</text><text transform="translate(224.5,156.5) rotate(-64)" y="3.1">69</text><text transform="translate(229.0,156.5) rotate(-62)" y="3.1">70</text><text transform="translate(234.1,156.0) rotate(-60)" y="3.1">71</text><text transform="translate(239.7,155.5) rotate(-58)" y="3.1">72</text><text transform="translate(245.5,155.4) rotate(-55)" y="3.1">73</text><text transform="translate(252.0,155.0) rotate(-53)" y="3.1">74</text><text transform="translate(259.5,154.3) rotate(-49)" y="3.1">75</text><text transform="translate(267.5,153.8) rotate(-46)" y="3.1">76</text><text transform="translate(202.2,150.5) rotate(-69)" y="3.1">62</text><text transform="translate(205.4,150.0) rotate(-67)" y="3.1">63</text><text transform="translate(208.6,150.0) rotate(-66)" y="3.1">64</text><text transform="translate(212.0,150.0) rotate(-64)" y="3.1">65</text><text transform="translate(215.7,150.0) rotate(-63)" y="3.1">66</text><text transform="translate(219.5,150.0) rotate(-61)" y="3.1">67</text><text transform="translate(223.7,150.0) rotate(-59)" y="3.1">68</text><text transform="translate(228.1,150.0) rotate(-57)" y="3.1">69</text><text transform="translate(233.0,149.9) rotate(-55)" y="3.1">70</text><text transform="translate(238.1,150.0) rotate(-53)" y="3.1">71</text><text transform="translate(244.1,149.5) rotate(-50)" y="3.1">72</text><text transform="translate(250.2,149.5) rotate(-47)" y="3.1">73</text><text transform="translate(257.0,149.3) rotate(-44)" y="3.1">74</text><text transform="translate(264.1,149.5) rotate(-42)" y="3.1">75</text><text transform="translate(272.5,149.2) rotate(-39)" y="3.1">76</text><text transform="translate(161.3,359.5) rotate(-85)" y="3.1">58</text><text transform="translate(162.4,359.0) rotate(-84)" y="3.1">59</text><text transform="translate(163.5,358.5) rotate(-84)" y="3.1">60</text><text transform="translate(164.7,358.5) rotate(-84)" y="3.1">61</text><text transform="translate(165.9,358.0) rotate(-84)" y="3.1">62</text><text transform="translate(167.3,357.5) rotate(-83)" y="3.1">63</text><text transform="translate(168.7,357.0) rotate(-83)" y="3.1">64</text><text transform="translate(170.2,356.5) rotate(-83)" y="3.1">65</text><text transform="translate(171.8,356.0) rotate(-82)" y="3.1">66</text><text transform="translate(173.4,355.5) rotate(-82)" y="3.1">67</text><text transform="translate(175.2,355.0) rotate(-82)" y="3.1">68</text><text transform="translate(177.2,354.0) rotate(-81)" y="3.1">69</text><text transform="translate(179.3,353.5) rotate(-81)" y="3.1">70</text><text transform="translate(181.5,352.9) rotate(-80)" y="3.1">71</text><text transform="translate(183.9,352.0) rotate(-80)" y="3.1">72</text><text transform="translate(186.6,351.0) rotate(-79)" y="3.1">73</text><text transform="translate(189.5,350.0) rotate(-78)" y="3.1">74</text></g>
</g>
<path d="M137 146L285 146L292 155L300.4 185.9L310 220.3L320.6 248.9L331.3 275L338.5 290L343.8 298.5L360.4 329.4L377 358L393.7 381.7L415 405.5L430 417.8L443.6 430L453.8 435.6L477.5 451L501.3 465.4L525 477.2L548.8 486.7L572.6 493.9L596.3 501L620 507L643.9 511.7L670 517L696.9 522.2L743.7 530.4L790.6 535L837.5 540.5L873 543.7" fill="none" stroke="#000" stroke-width="1" shape-rendering="crispEdges"/>
<path d="M137 590L137 601L148.5 601Z" fill="#fff"/><path d="M138.5 592.5L146 600" stroke="#00008f" stroke-width="2.2" fill="none"/>
<rect x="873" y="101" width="1" height="500" fill="#222"/>
<rect x="137" y="600" width="737" height="1" fill="#000"/>
<g shape-rendering="crispEdges"><rect x="888" y="593.19" width="20" height="8.11" fill="#00008f"/><rect x="888" y="585.38" width="20" height="8.11" fill="#00009f"/><rect x="888" y="577.56" width="20" height="8.11" fill="#0000af"/><rect x="888" y="569.75" width="20" height="8.11" fill="#0000bf"/><rect x="888" y="561.94" width="20" height="8.11" fill="#0000cf"/><rect x="888" y="554.12" width="20" height="8.11" fill="#0000df"/><rect x="888" y="546.31" width="20" height="8.11" fill="#0000ef"/><rect x="888" y="538.50" width="20" height="8.11" fill="#0000ff"/><rect x="888" y="530.69" width="20" height="8.11" fill="#0010ff"/><rect x="888" y="522.88" width="20" height="8.11" fill="#0020ff"/><rect x="888" y="515.06" width="20" height="8.11" fill="#0030ff"/><rect x="888" y="507.25" width="20" height="8.11" fill="#0040ff"/><rect x="888" y="499.44" width="20" height="8.11" fill="#0050ff"/><rect x="888" y="491.62" width="20" height="8.11" fill="#0060ff"/><rect x="888" y="483.81" width="20" height="8.11" fill="#0070ff"/><rect x="888" y="476.00" width="20" height="8.11" fill="#0080ff"/><rect x="888" y="468.19" width="20" height="8.11" fill="#008fff"/><rect x="888" y="460.38" width="20" height="8.11" fill="#009fff"/><rect x="888" y="452.56" width="20" height="8.11" fill="#00afff"/><rect x="888" y="444.75" width="20" height="8.11" fill="#00bfff"/><rect x="888" y="436.94" width="20" height="8.11" fill="#00cfff"/><rect x="888" y="429.12" width="20" height="8.11" fill="#00dfff"/><rect x="888" y="421.31" width="20" height="8.11" fill="#00efff"/><rect x="888" y="413.50" width="20" height="8.11" fill="#00ffff"/><rect x="888" y="405.69" width="20" height="8.11" fill="#10ffef"/><rect x="888" y="397.88" width="20" height="8.11" fill="#20ffdf"/><rect x="888" y="390.06" width="20" height="8.11" fill="#30ffcf"/><rect x="888" y="382.25" width="20" height="8.11" fill="#40ffbf"/><rect x="888" y="374.44" width="20" height="8.11" fill="#50ffaf"/><rect x="888" y="366.62" width="20" height="8.11" fill="#60ff9f"/><rect x="888" y="358.81" width="20" height="8.11" fill="#70ff8f"/><rect x="888" y="351.00" width="20" height="8.11" fill="#80ff80"/><rect x="888" y="343.19" width="20" height="8.11" fill="#8fff70"/><rect x="888" y="335.38" width="20" height="8.11" fill="#9fff60"/><rect x="888" y="327.56" width="20" height="8.11" fill="#afff50"/><rect x="888" y="319.75" width="20" height="8.11" fill="#bfff40"/><rect x="888" y="311.94" width="20" height="8.11" fill="#cfff30"/><rect x="888" y="304.12" width="20" height="8.11" fill="#dfff20"/><rect x="888" y="296.31" width="20" height="8.11" fill="#efff10"/><rect x="888" y="288.50" width="20" height="8.11" fill="#ffff00"/><rect x="888" y="280.69" width="20" height="8.11" fill="#ffef00"/><rect x="888" y="272.88" width="20" height="8.11" fill="#ffdf00"/><rect x="888" y="265.06" width="20" height="8.11" fill="#ffcf00"/><rect x="888" y="257.25" width="20" height="8.11" fill="#ffbf00"/><rect x="888" y="249.44" width="20" height="8.11" fill="#ffaf00"/><rect x="888" y="241.62" width="20" height="8.11" fill="#ff9f00"/><rect x="888" y="233.81" width="20" height="8.11" fill="#ff8f00"/><rect x="888" y="226.00" width="20" height="8.11" fill="#ff8000"/><rect x="888" y="218.19" width="20" height="8.11" fill="#ff7000"/><rect x="888" y="210.38" width="20" height="8.11" fill="#ff6000"/><rect x="888" y="202.56" width="20" height="8.11" fill="#ff5000"/><rect x="888" y="194.75" width="20" height="8.11" fill="#ff4000"/><rect x="888" y="186.94" width="20" height="8.11" fill="#ff3000"/><rect x="888" y="179.12" width="20" height="8.11" fill="#ff2000"/><rect x="888" y="171.31" width="20" height="8.11" fill="#ff1000"/><rect x="888" y="163.50" width="20" height="8.11" fill="#ff0000"/><rect x="888" y="155.69" width="20" height="8.11" fill="#ef0000"/><rect x="888" y="147.88" width="20" height="8.11" fill="#df0000"/><rect x="888" y="140.06" width="20" height="8.11" fill="#cf0000"/><rect x="888" y="132.25" width="20" height="8.11" fill="#bf0000"/><rect x="888" y="124.44" width="20" height="8.11" fill="#af0000"/><rect x="888" y="116.62" width="20" height="8.11" fill="#9f0000"/><rect x="888" y="108.81" width="20" height="8.11" fill="#8f0000"/><rect x="888" y="101.00" width="20" height="8.11" fill="#800000"/><rect x="888.5" y="101.5" width="19" height="500" fill="none" stroke="#000" stroke-width="1"/>
<rect x="889" y="551" width="5" height="1" fill="#000"/><rect x="903" y="551" width="5" height="1" fill="#000"/>
<rect x="889" y="501" width="5" height="1" fill="#000"/><rect x="903" y="501" width="5" height="1" fill="#000"/>
<rect x="889" y="451" width="5" height="1" fill="#000"/><rect x="903" y="451" width="5" height="1" fill="#000"/>
<rect x="889" y="401" width="5" height="1" fill="#000"/><rect x="903" y="401" width="5" height="1" fill="#000"/>
<rect x="889" y="351" width="5" height="1" fill="#000"/><rect x="903" y="351" width="5" height="1" fill="#000"/>
<rect x="889" y="301" width="5" height="1" fill="#000"/><rect x="903" y="301" width="5" height="1" fill="#000"/>
<rect x="889" y="251" width="5" height="1" fill="#000"/><rect x="903" y="251" width="5" height="1" fill="#000"/>
<rect x="889" y="201" width="5" height="1" fill="#000"/><rect x="903" y="201" width="5" height="1" fill="#000"/>
<rect x="889" y="151" width="5" height="1" fill="#000"/><rect x="903" y="151" width="5" height="1" fill="#000"/>
</g>
<g font-size="9.3" fill="#000"><text x="198.0" y="611.4" text-anchor="middle" font-size="9.1">500</text><text x="259.4" y="611.4" text-anchor="middle" font-size="9.1">1000</text><text x="320.7" y="611.4" text-anchor="middle" font-size="9.1">1500</text><text x="382.0" y="611.4" text-anchor="middle" font-size="9.1">2000</text><text x="443.4" y="611.4" text-anchor="middle" font-size="9.1">2500</text><text x="504.7" y="611.4" text-anchor="middle" font-size="9.1">3000</text><text x="566.0" y="611.4" text-anchor="middle" font-size="9.1">3500</text><text x="627.4" y="611.4" text-anchor="middle" font-size="9.1">4000</text><text x="688.7" y="611.4" text-anchor="middle" font-size="9.1">4500</text><text x="750.0" y="611.4" text-anchor="middle" font-size="9.1">5000</text><text x="811.4" y="611.4" text-anchor="middle" font-size="9.1">5500</text><text x="872.7" y="611.4" text-anchor="middle" font-size="9.1">6000</text><text x="134.3" y="603.8" text-anchor="end" font-size="9.1">0</text><text x="134.3" y="547.2" text-anchor="end" font-size="9.1">50</text><text x="134.3" y="490.7" text-anchor="end" font-size="9.1">100</text><text x="134.3" y="434.1" text-anchor="end" font-size="9.1">150</text><text x="134.3" y="377.5" text-anchor="end" font-size="9.1">200</text><text x="134.3" y="320.9" text-anchor="end" font-size="9.1">250</text><text x="134.3" y="264.4" text-anchor="end" font-size="9.1">300</text><text x="134.3" y="207.8" text-anchor="end" font-size="9.1">350</text><text x="134.3" y="151.2" text-anchor="end" font-size="9.1">400</text><text x="504.5" y="94" text-anchor="middle">Efficiency, %</text><text x="504.2" y="623.1" text-anchor="middle">Speed, RPM</text><text transform="translate(112.3,350.9) rotate(-90)" text-anchor="middle">Torque, N*m</text><text x="909.7" y="604.3" font-size="9.1">0</text><text x="909.7" y="554.3" font-size="9.1">10</text><text x="909.7" y="504.3" font-size="9.1">20</text><text x="909.7" y="454.3" font-size="9.1">30</text><text x="909.7" y="404.3" font-size="9.1">40</text><text x="909.7" y="354.3" font-size="9.1">50</text><text x="909.7" y="304.3" font-size="9.1">60</text><text x="909.7" y="254.3" font-size="9.1">70</text><text x="909.7" y="204.3" font-size="9.1">80</text><text x="909.7" y="154.3" font-size="9.1">90</text><text x="909.7" y="104.3" font-size="9.1">100</text></g>
</svg>
<div id="edgeT"></div><div id="cornerTL" style="position:absolute;left:0;top:0;width:2px;height:2px;background:linear-gradient(135deg,#f4f4f4 0,#f4f4f4 50%,#6a6e72 50%)"></div><div id="edgeL"></div><div id="edgeR"></div><div id="edgeB"></div>
</body></html>
